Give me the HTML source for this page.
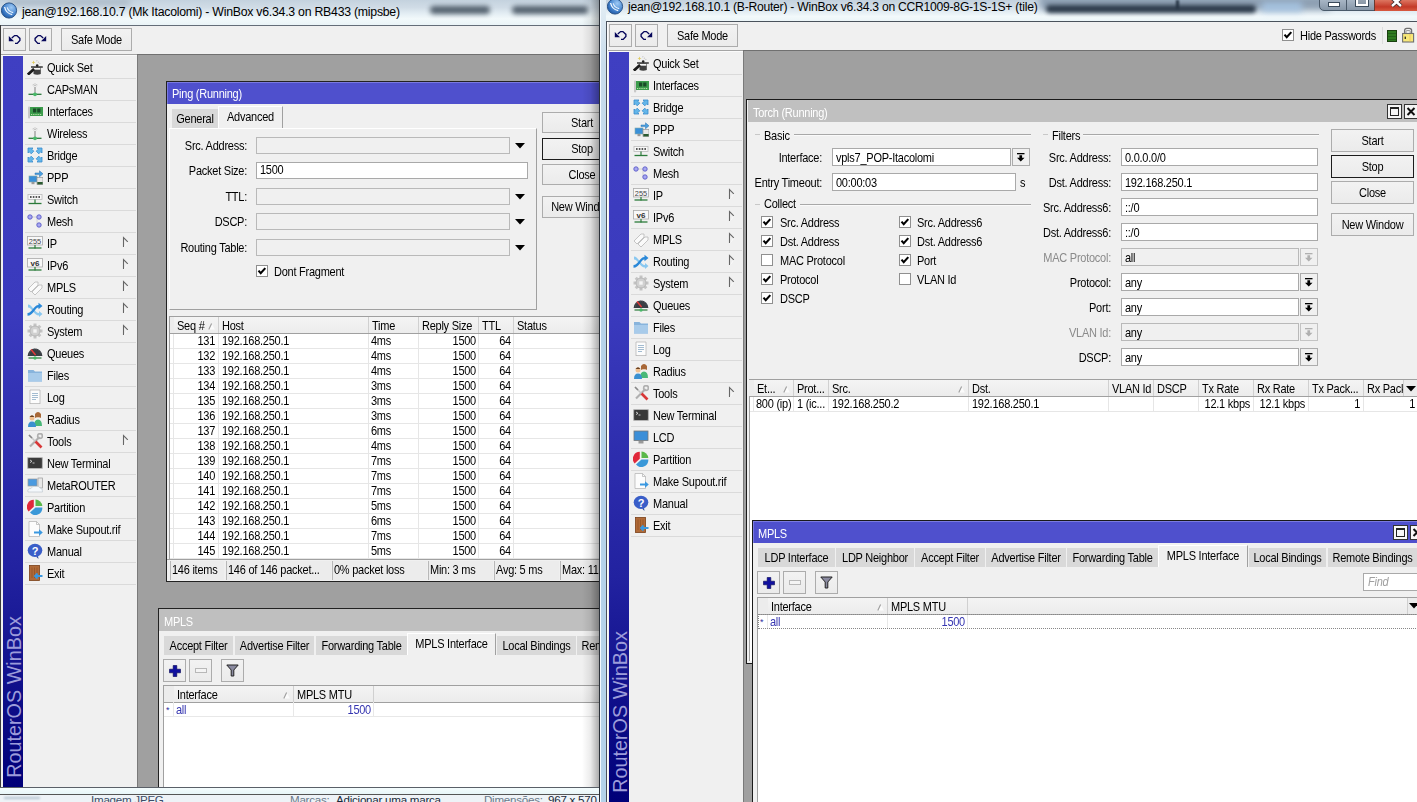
<!DOCTYPE html><html><head><meta charset="utf-8"><style>
html,body{margin:0;padding:0;}
body{width:1417px;height:802px;overflow:hidden;position:relative;background:#a0a0a0;font-family:"Liberation Sans",sans-serif;}
div,svg{position:absolute;}
.t{white-space:nowrap;letter-spacing:-0.25px;}
.clip{overflow:hidden;}
</style></head><body>
<div style="left:0px;top:0px;width:600px;height:802px;background:#eef4f8;"></div>
<div style="left:0px;top:0px;width:600px;height:25px;background:linear-gradient(180deg,#c4d2de 0%,#d0dce6 30%,#e4eef4 55%,#f2f9fb 75%,#eaf4f7 100%);"></div>
<div style="left:430px;top:6px;width:60px;height:8px;background:#3c4a58;border-radius:4px;filter:blur(2.5px);opacity:.85;"></div>
<div style="left:512px;top:6px;width:76px;height:8px;background:#3c4a58;border-radius:4px;filter:blur(2.5px);opacity:.85;"></div>
<div style="left:10px;top:0px;width:120px;height:5px;background:#8a9aaa;filter:blur(3px);opacity:.6;"></div>
<svg style="left:1px;top:2px" width="17" height="17" viewBox="0 0 17 17"><defs><radialGradient id="lg" cx="65%" cy="30%" r="75%"><stop offset="0" stop-color="#9cc8f4"/><stop offset="0.6" stop-color="#4a88d0"/><stop offset="1" stop-color="#1e5aa8"/></radialGradient></defs><circle cx="8" cy="8.5" r="7.6" fill="url(#lg)" stroke="#1f4a80" stroke-width="0.9"/><path d="M3.6 5 Q4.8 11.2 11.2 12.6" stroke="#f4faff" stroke-width="1.3" fill="none"/><path d="M6.2 5.4 Q7.4 9.6 12.2 10.6" stroke="#e8f4ff" stroke-width="1.1" fill="none"/></svg>
<div class="t" style="left:22px;top:4.869999999999999px;font-size:12.3px;line-height:14.14px;color:#000;">jean@192.168.10.7 (Mk Itacolomi) - WinBox v6.34.3 on RB433 (mipsbe)</div>
<div style="left:0px;top:25px;width:600px;height:762px;background:#f0f0f0;"></div>
<div style="left:0px;top:25px;width:600px;height:1px;background:#646d78;"></div>
<div style="left:0px;top:25px;width:1px;height:762px;background:#3a3a3a;"></div>
<div style="left:3px;top:28px;width:23px;height:23px;box-sizing:border-box;border:1px solid #acacac;background:linear-gradient(#f2f2f2,#ebebeb);"></div>
<svg style="left:3px;top:28px" width="23" height="23" viewBox="0 0 23 23"><g><path d="M5.8 8 V13.2 H11 Z" fill="#06065a"/><path d="M8.8 10 L11.6 7.6 H13.9 L16.9 10.4 V12.4 L14.2 15.4 H12" fill="none" stroke="#06065a" stroke-width="1.35"/></g></svg>
<div style="left:29px;top:28px;width:23px;height:23px;box-sizing:border-box;border:1px solid #acacac;background:linear-gradient(#f2f2f2,#ebebeb);"></div>
<svg style="left:29px;top:28px" width="23" height="23" viewBox="0 0 23 23"><g transform="translate(23,0) scale(-1,1)"><path d="M5.8 8 V13.2 H11 Z" fill="#06065a"/><path d="M8.8 10 L11.6 7.6 H13.9 L16.9 10.4 V12.4 L14.2 15.4 H12" fill="none" stroke="#06065a" stroke-width="1.35"/></g></svg>
<div style="left:61px;top:28px;width:71px;height:23px;box-sizing:border-box;border:1px solid #acacac;background:linear-gradient(#f2f2f2,#ebebeb);"></div>
<div class="t" style="left:61px;top:34.04px;width:71px;text-align:center;font-size:11px;line-height:12.65px;color:#000;transform:scaleY(1.12);transform-origin:0 9.955px;">Safe Mode</div>
<div style="left:1px;top:54px;width:599px;height:1px;background:#a4a4a4;"></div>
<div style="left:1px;top:55px;width:136px;height:1px;background:#fafafa;"></div>
<div style="left:3px;top:56px;width:20px;height:731px;background:linear-gradient(180deg,#3f3fc2 0%,#3a3abd 35%,#2222a0 70%,#000078 100%);"></div>
<div class="t" style="left:14.0px;top:697.0px;transform:translate(-50%,-50%) rotate(-90deg);font-size:19.8px;line-height:20px;color:#9c9cda;letter-spacing:0px;">RouterOS WinBox</div>
<div style="left:23px;top:56px;width:114px;height:731px;background:#f0f0f0;"></div>
<svg style="left:27px;top:59px" width="16" height="16" viewBox="0 0 16 16"><path d="M9.5 1.5 L14 5.5" stroke="#c0c0c0" stroke-width="1.2" stroke-dasharray="1 1"/><path d="M6.5 8.5 H13.8 V15 Q10.2 16.6 6.5 15Z" fill="#404040"/><rect x="7" y="8.8" width="6.3" height="1.9" fill="#f6f6f6"/><rect x="4" y="7.3" width="11.8" height="1.4" fill="#2a2a2a"/><circle cx="10.2" cy="6.6" r="1.3" fill="#222"/><path d="M0.8 15.6 L7 10" stroke="#1a1a1a" stroke-width="2.8"/><path d="M6.5 1.5 L7.1 2.9 L8.5 3.4 L7.1 3.9 L6.5 5.3 L5.9 3.9 L4.5 3.4 L5.9 2.9Z" fill="#e0cc60"/></svg>
<div class="t" style="left:47px;top:62.04px;font-size:11px;line-height:12.65px;color:#000;transform:scaleY(1.12);transform-origin:0 9.955px;">Quick Set</div>
<div style="left:25px;top:78px;width:111px;height:1px;background:#dadada;"></div>
<svg style="left:27px;top:81px" width="16" height="16" viewBox="0 0 16 16"><path d="M5.5 4 Q8 1.5 10.5 4" stroke="#c8c8c8" stroke-width="0.9" fill="none"/><path d="M6.5 5 Q8 3.8 9.5 5" stroke="#bbb" stroke-width="0.9" fill="none"/><path d="M8 6 V12" stroke="#b8b8b8" stroke-width="2"/><path d="M1.5 13.3 H14.5" stroke="#2a7a3a" stroke-width="1.3"/><circle cx="8" cy="13.3" r="1.9" fill="#48b868"/></svg>
<div class="t" style="left:47px;top:84.03999999999999px;font-size:11px;line-height:12.65px;color:#000;transform:scaleY(1.12);transform-origin:0 9.955px;">CAPsMAN</div>
<div style="left:25px;top:100px;width:111px;height:1px;background:#dadada;"></div>
<svg style="left:27px;top:103px" width="16" height="16" viewBox="0 0 16 16"><rect x="1" y="3.5" width="2.2" height="12" rx="1" fill="#c8c8c8"/><rect x="3" y="4" width="13" height="9" fill="#3c9c4c"/><rect x="6" y="5.5" width="3.2" height="4" fill="#1a4a28"/><rect x="10.2" y="5.5" width="3.2" height="4" fill="#1a4a28"/><path d="M4 11.5 H15" stroke="#b8e0a8" stroke-width="1" stroke-dasharray="1 0.8"/></svg>
<div class="t" style="left:47px;top:106.03999999999999px;font-size:11px;line-height:12.65px;color:#000;transform:scaleY(1.12);transform-origin:0 9.955px;">Interfaces</div>
<div style="left:25px;top:122px;width:111px;height:1px;background:#dadada;"></div>
<svg style="left:27px;top:125px" width="16" height="16" viewBox="0 0 16 16"><path d="M5.5 4 Q8 1.5 10.5 4" stroke="#c8c8c8" stroke-width="0.9" fill="none"/><path d="M6.5 5 Q8 3.8 9.5 5" stroke="#bbb" stroke-width="0.9" fill="none"/><path d="M8 6 V12" stroke="#b8b8b8" stroke-width="2"/><path d="M1.5 13.3 H14.5" stroke="#2a7a3a" stroke-width="1.3"/><circle cx="8" cy="13.3" r="1.9" fill="#48b868"/></svg>
<div class="t" style="left:47px;top:128.04px;font-size:11px;line-height:12.65px;color:#000;transform:scaleY(1.12);transform-origin:0 9.955px;">Wireless</div>
<div style="left:25px;top:144px;width:111px;height:1px;background:#dadada;"></div>
<svg style="left:27px;top:147px" width="16" height="16" viewBox="0 0 16 16"><path d="M1 1 H6 L4.8 2.2 L6.8 4.2 L4.2 6.8 L2.2 4.8 L1 6Z" fill="#62b6ea" stroke="#3a8ccc" stroke-width="0.8"/><g transform="translate(16,0) scale(-1,1)"><path d="M1 1 H6 L4.8 2.2 L6.8 4.2 L4.2 6.8 L2.2 4.8 L1 6Z" fill="#62b6ea" stroke="#3a8ccc" stroke-width="0.8"/></g><g transform="translate(0,16) scale(1,-1)"><path d="M1 1 H6 L4.8 2.2 L6.8 4.2 L4.2 6.8 L2.2 4.8 L1 6Z" fill="#62b6ea" stroke="#3a8ccc" stroke-width="0.8"/></g><g transform="translate(16,16) scale(-1,-1)"><path d="M1 1 H6 L4.8 2.2 L6.8 4.2 L4.2 6.8 L2.2 4.8 L1 6Z" fill="#62b6ea" stroke="#3a8ccc" stroke-width="0.8"/></g></svg>
<div class="t" style="left:47px;top:150.04px;font-size:11px;line-height:12.65px;color:#000;transform:scaleY(1.12);transform-origin:0 9.955px;">Bridge</div>
<div style="left:25px;top:166px;width:111px;height:1px;background:#dadada;"></div>
<svg style="left:27px;top:169px" width="16" height="16" viewBox="0 0 16 16"><rect x="2" y="7" width="8" height="6" fill="#3a90d8" stroke="#8aa" stroke-width="0.6"/><rect x="4.5" y="13" width="3" height="2.2" fill="#999"/><rect x="10" y="8.5" width="6" height="7" fill="#e8e8e8" stroke="#888" stroke-width="0.6"/><rect x="10.3" y="13" width="5.4" height="2.4" fill="#2a5a30"/><path d="M8 4 H12.5 V1.8 L16 4.8 L12.5 7.8 V5.6 H8Z" fill="#4aa0e0" stroke="#2a70b0" stroke-width="0.5"/></svg>
<div class="t" style="left:47px;top:172.04px;font-size:11px;line-height:12.65px;color:#000;transform:scaleY(1.12);transform-origin:0 9.955px;">PPP</div>
<div style="left:25px;top:188px;width:111px;height:1px;background:#dadada;"></div>
<svg style="left:27px;top:191px" width="16" height="16" viewBox="0 0 16 16"><rect x="1" y="3.5" width="14" height="5" fill="#f8f8f8" stroke="#bbb" stroke-width="0.8"/><path d="M3 6 H4.6 M5.8 6 H7.4 M8.6 6 H10.2 M11.4 6 H13" stroke="#222" stroke-width="1.6"/><path d="M1.5 12.5 H14.5" stroke="#2a7a3a" stroke-width="1.3"/><path d="M8 8.5 V13" stroke="#2a7a3a" stroke-width="1.2"/></svg>
<div class="t" style="left:47px;top:194.04px;font-size:11px;line-height:12.65px;color:#000;transform:scaleY(1.12);transform-origin:0 9.955px;">Switch</div>
<div style="left:25px;top:210px;width:111px;height:1px;background:#dadada;"></div>
<svg style="left:27px;top:213px" width="16" height="16" viewBox="0 0 16 16"><path d="M4 4 H10 V12" stroke="#ccc" stroke-width="0.8" fill="none"/><circle cx="3" cy="4" r="2.2" fill="#a8a8f0" stroke="#5a5ac8" stroke-width="0.9"/><circle cx="12" cy="4" r="2.2" fill="#a8a8f0" stroke="#5a5ac8" stroke-width="0.9"/><circle cx="12" cy="12" r="2.2" fill="#a8a8f0" stroke="#5a5ac8" stroke-width="0.9"/></svg>
<div class="t" style="left:47px;top:216.04px;font-size:11px;line-height:12.65px;color:#000;transform:scaleY(1.12);transform-origin:0 9.955px;">Mesh</div>
<div style="left:25px;top:232px;width:111px;height:1px;background:#dadada;"></div>
<svg style="left:27px;top:235px" width="16" height="16" viewBox="0 0 16 16"><rect x="0.5" y="1.5" width="15" height="8.5" fill="#f8f8f8" stroke="#aaa" stroke-width="0.8"/><text x="8" y="8.6" font-size="7.4" text-anchor="middle" font-family="Liberation Sans" fill="#444">255</text><path d="M1.5 13 H14.5" stroke="#2a7a3a" stroke-width="1.3"/><path d="M8 10 V13.5" stroke="#2a7a3a" stroke-width="1.2"/></svg>
<div class="t" style="left:47px;top:238.04px;font-size:11px;line-height:12.65px;color:#000;transform:scaleY(1.12);transform-origin:0 9.955px;">IP</div>
<div style="left:25px;top:254px;width:111px;height:1px;background:#dadada;"></div>
<svg style="left:122px;top:236px" width="8" height="12" viewBox="0 0 8 12"><path d="M2 11 L6 6" fill="none" stroke="#fafafa" stroke-width="1"/><path d="M1.5 11 V1.5 L5.8 5.8" fill="none" stroke="#666" stroke-width="1.1"/></svg>
<svg style="left:27px;top:257px" width="16" height="16" viewBox="0 0 16 16"><rect x="0.5" y="1.5" width="15" height="8.5" fill="#f8f8f8" stroke="#aaa" stroke-width="0.8"/><text x="8" y="8.8" font-size="8" font-weight="bold" text-anchor="middle" font-family="Liberation Sans" fill="#333">v6</text><path d="M1.5 13 H14.5" stroke="#2a7a3a" stroke-width="1.3"/><path d="M8 10 V13.5" stroke="#2a7a3a" stroke-width="1.2"/></svg>
<div class="t" style="left:47px;top:260.04px;font-size:11px;line-height:12.65px;color:#000;transform:scaleY(1.12);transform-origin:0 9.955px;">IPv6</div>
<div style="left:25px;top:276px;width:111px;height:1px;background:#dadada;"></div>
<svg style="left:122px;top:258px" width="8" height="12" viewBox="0 0 8 12"><path d="M2 11 L6 6" fill="none" stroke="#fafafa" stroke-width="1"/><path d="M1.5 11 V1.5 L5.8 5.8" fill="none" stroke="#666" stroke-width="1.1"/></svg>
<svg style="left:27px;top:279px" width="16" height="16" viewBox="0 0 16 16"><path d="M1 10 L8 3 L11 3 L11 6 L4 13Z" fill="#fafafa" stroke="#b8b8b8" stroke-width="0.8"/><path d="M5 13 L12 6 L15 6 L15 9 L8 16Z" fill="#fafafa" stroke="#b8b8b8" stroke-width="0.8"/></svg>
<div class="t" style="left:47px;top:282.04px;font-size:11px;line-height:12.65px;color:#000;transform:scaleY(1.12);transform-origin:0 9.955px;">MPLS</div>
<div style="left:25px;top:298px;width:111px;height:1px;background:#dadada;"></div>
<svg style="left:122px;top:280px" width="8" height="12" viewBox="0 0 8 12"><path d="M2 11 L6 6" fill="none" stroke="#fafafa" stroke-width="1"/><path d="M1.5 11 V1.5 L5.8 5.8" fill="none" stroke="#666" stroke-width="1.1"/></svg>
<svg style="left:27px;top:301px" width="16" height="16" viewBox="0 0 16 16"><path d="M1 3.5 C5 3.5 8 12 12 12 V10 L15.5 13 L12 16 V14.5 C7 14.5 5 6.5 1 6.5Z" fill="#8ac8f0"/><path d="M0.5 12 C5 12 7 4 11.5 4 V1.8 L15.5 5 L11.5 8.2 V6.5 C8 6.5 6 14.8 0.5 14.8Z" fill="#2a88d8"/></svg>
<div class="t" style="left:47px;top:304.04px;font-size:11px;line-height:12.65px;color:#000;transform:scaleY(1.12);transform-origin:0 9.955px;">Routing</div>
<div style="left:25px;top:320px;width:111px;height:1px;background:#dadada;"></div>
<svg style="left:122px;top:302px" width="8" height="12" viewBox="0 0 8 12"><path d="M2 11 L6 6" fill="none" stroke="#fafafa" stroke-width="1"/><path d="M1.5 11 V1.5 L5.8 5.8" fill="none" stroke="#666" stroke-width="1.1"/></svg>
<svg style="left:27px;top:323px" width="16" height="16" viewBox="0 0 16 16"><g fill="#c4c4c4"><rect x="6.5" y="0.5" width="3" height="15"/><rect x="0.5" y="6.5" width="15" height="3"/><rect x="6.5" y="0.5" width="3" height="15" transform="rotate(45 8 8)"/><rect x="6.5" y="0.5" width="3" height="15" transform="rotate(-45 8 8)"/></g><circle cx="8" cy="8" r="5" fill="#d0d0d0" stroke="#b0b0b0" stroke-width="0.8"/><rect x="6.3" y="6.3" width="3.4" height="3.4" fill="#f4f4f4"/></svg>
<div class="t" style="left:47px;top:326.04px;font-size:11px;line-height:12.65px;color:#000;transform:scaleY(1.12);transform-origin:0 9.955px;">System</div>
<div style="left:25px;top:342px;width:111px;height:1px;background:#dadada;"></div>
<svg style="left:122px;top:324px" width="8" height="12" viewBox="0 0 8 12"><path d="M2 11 L6 6" fill="none" stroke="#fafafa" stroke-width="1"/><path d="M1.5 11 V1.5 L5.8 5.8" fill="none" stroke="#666" stroke-width="1.1"/></svg>
<svg style="left:27px;top:345px" width="16" height="16" viewBox="0 0 16 16"><path d="M0.6 11 A7.4 7.6 0 0 1 15.4 11 Z" fill="#3a3e44"/><path d="M2.5 9.5 A5.5 5.5 0 0 1 13.5 9.5" fill="none" stroke="#5a6068" stroke-width="0.8" stroke-dasharray="1 1.4"/><path d="M4 4.5 L8.6 10" stroke="#e83a3a" stroke-width="1.4"/><path d="M1.5 13 H14.5" stroke="#2a7a3a" stroke-width="1.2"/><circle cx="8" cy="13" r="1.7" fill="#48b868"/></svg>
<div class="t" style="left:47px;top:348.04px;font-size:11px;line-height:12.65px;color:#000;transform:scaleY(1.12);transform-origin:0 9.955px;">Queues</div>
<div style="left:25px;top:364px;width:111px;height:1px;background:#dadada;"></div>
<svg style="left:27px;top:367px" width="16" height="16" viewBox="0 0 16 16"><path d="M1 3 H6.5 L8 4.5 H15 V14.5 H1Z" fill="#88b4dc"/><path d="M1 6 H15 V14.5 H1Z" fill="#a8cbea"/></svg>
<div class="t" style="left:47px;top:370.04px;font-size:11px;line-height:12.65px;color:#000;transform:scaleY(1.12);transform-origin:0 9.955px;">Files</div>
<div style="left:25px;top:386px;width:111px;height:1px;background:#dadada;"></div>
<svg style="left:27px;top:389px" width="16" height="16" viewBox="0 0 16 16"><path d="M3 1 H13 V15 L12 14 L11 15 L10 14 L9 15 L8 14 L7 15 L6 14 L5 15 L4 14 L3 15Z" fill="#fcfcfc" stroke="#b0b0b0" stroke-width="0.7"/><path d="M5 4.5 H11 M5 6.5 H11 M5 8.5 H11 M5 10.5 H9" stroke="#8aaac4" stroke-width="0.8"/></svg>
<div class="t" style="left:47px;top:392.04px;font-size:11px;line-height:12.65px;color:#000;transform:scaleY(1.12);transform-origin:0 9.955px;">Log</div>
<div style="left:25px;top:408px;width:111px;height:1px;background:#dadada;"></div>
<svg style="left:27px;top:411px" width="16" height="16" viewBox="0 0 16 16"><circle cx="11" cy="4" r="2.6" fill="#e8b888"/><path d="M8 3 Q11 -1 14 3 L14 7 Q11 5 8 7Z" fill="#a86838"/><path d="M7 15 Q7 8.5 11 8.5 Q15 8.5 15 15Z" fill="#48b878"/><circle cx="5" cy="7" r="2.5" fill="#f0c090"/><path d="M2.5 6 Q5 2.5 7.5 6Z" fill="#6a4020"/><path d="M1 16 Q1 10.5 5 10.5 Q9 10.5 9 16Z" fill="#3a90d0"/></svg>
<div class="t" style="left:47px;top:414.04px;font-size:11px;line-height:12.65px;color:#000;transform:scaleY(1.12);transform-origin:0 9.955px;">Radius</div>
<div style="left:25px;top:430px;width:111px;height:1px;background:#dadada;"></div>
<svg style="left:27px;top:433px" width="16" height="16" viewBox="0 0 16 16"><path d="M3 13.5 L12.5 4" stroke="#b0b0b0" stroke-width="2.2"/><circle cx="13" cy="3" r="2.4" fill="none" stroke="#b0b0b0" stroke-width="1.6"/><path d="M2 2 L14 14" stroke="#c8c8c8" stroke-width="1.5"/><path d="M8.5 8.5 L14.5 14.5" stroke="#d83838" stroke-width="2.6"/><path d="M2 2 L5 5" stroke="#888" stroke-width="1.5"/></svg>
<div class="t" style="left:47px;top:436.04px;font-size:11px;line-height:12.65px;color:#000;transform:scaleY(1.12);transform-origin:0 9.955px;">Tools</div>
<div style="left:25px;top:452px;width:111px;height:1px;background:#dadada;"></div>
<svg style="left:122px;top:434px" width="8" height="12" viewBox="0 0 8 12"><path d="M2 11 L6 6" fill="none" stroke="#fafafa" stroke-width="1"/><path d="M1.5 11 V1.5 L5.8 5.8" fill="none" stroke="#666" stroke-width="1.1"/></svg>
<svg style="left:27px;top:455px" width="16" height="16" viewBox="0 0 16 16"><rect x="0.5" y="2.5" width="15" height="11" rx="1.2" fill="#3a3a3a" stroke="#b4b4b4" stroke-width="1.2"/><path d="M3 5 L5 6.3 L3 7.6 M5.5 8 H7.5" stroke="#e8e8e8" stroke-width="0.8" fill="none"/></svg>
<div class="t" style="left:47px;top:458.04px;font-size:11px;line-height:12.65px;color:#000;transform:scaleY(1.12);transform-origin:0 9.955px;">New Terminal</div>
<div style="left:25px;top:474px;width:111px;height:1px;background:#dadada;"></div>
<svg style="left:27px;top:477px" width="16" height="16" viewBox="0 0 16 16"><rect x="1" y="2" width="9" height="7" fill="#4a9ae0" stroke="#999" stroke-width="0.7"/><rect x="11" y="1" width="4.5" height="10" fill="#e8e8e8" stroke="#999" stroke-width="0.7"/><path d="M1 15 Q0 11.5 4 11.5 Q5 8.5 9 9.5 Q11.5 8.5 13 11 Q16 11 15.5 15Z" fill="#f4f8fc" stroke="#c0c8d0" stroke-width="0.7"/></svg>
<div class="t" style="left:47px;top:480.04px;font-size:11px;line-height:12.65px;color:#000;transform:scaleY(1.12);transform-origin:0 9.955px;">MetaROUTER</div>
<div style="left:25px;top:496px;width:111px;height:1px;background:#dadada;"></div>
<svg style="left:27px;top:499px" width="16" height="16" viewBox="0 0 16 16"><path d="M6.8 7.8 L6.8 0.8 A7 7 0 0 0 1.6 12.4Z" fill="#e0283a"/><path d="M8.5 7 L8.5 0.5 A7 7 0 0 1 15.3 7Z" fill="#5ab84a"/><path d="M8.5 8.6 L15.3 8.6 A7 7 0 0 1 3 13.6Z" fill="#3a98d8"/></svg>
<div class="t" style="left:47px;top:502.04px;font-size:11px;line-height:12.65px;color:#000;transform:scaleY(1.12);transform-origin:0 9.955px;">Partition</div>
<div style="left:25px;top:518px;width:111px;height:1px;background:#dadada;"></div>
<svg style="left:27px;top:521px" width="16" height="16" viewBox="0 0 16 16"><path d="M2 0.5 H9.5 L12.5 3.5 V15.5 H2Z" fill="#fcfcfc" stroke="#b0b0b0" stroke-width="0.7"/><path d="M9.5 0.5 V3.5 H12.5" fill="none" stroke="#b0b0b0" stroke-width="0.7"/><path d="M7 10.5 H12 V8.3 L15.8 11.5 L12 14.7 V12.5 H7Z" fill="#3a98e0"/></svg>
<div class="t" style="left:47px;top:524.04px;font-size:11px;line-height:12.65px;color:#000;transform:scaleY(1.12);transform-origin:0 9.955px;">Make Supout.rif</div>
<div style="left:25px;top:540px;width:111px;height:1px;background:#dadada;"></div>
<svg style="left:27px;top:543px" width="16" height="16" viewBox="0 0 16 16"><path d="M9 13.5 L11.5 16 L11 13Z" fill="#2a4aa0"/><ellipse cx="8" cy="7.3" rx="7.3" ry="6.6" fill="#3a5ec8"/><text x="8" y="11.5" font-size="11" font-weight="bold" text-anchor="middle" font-family="Liberation Sans" fill="#fff">?</text></svg>
<div class="t" style="left:47px;top:546.04px;font-size:11px;line-height:12.65px;color:#000;transform:scaleY(1.12);transform-origin:0 9.955px;">Manual</div>
<div style="left:25px;top:562px;width:111px;height:1px;background:#dadada;"></div>
<svg style="left:27px;top:565px" width="16" height="16" viewBox="0 0 16 16"><rect x="2.5" y="0.5" width="10" height="15" fill="#b06a38" stroke="#7a4018" stroke-width="0.8"/><path d="M5 2.5 V13 M7.5 2.5 V13 M10 2.5 V13" stroke="#8a4a20" stroke-width="0.6"/><path d="M8 11 H15.5 M10.5 8.5 L8 11 L10.5 13.5" stroke="#3a98e0" stroke-width="1.8" fill="none"/></svg>
<div class="t" style="left:47px;top:568.04px;font-size:11px;line-height:12.65px;color:#000;transform:scaleY(1.12);transform-origin:0 9.955px;">Exit</div>
<div style="left:25px;top:584px;width:111px;height:1px;background:#dadada;"></div>
<div style="left:137px;top:55px;width:463px;height:732px;background:#a0a0a0;"></div>
<div style="left:137px;top:55px;width:1px;height:732px;background:#7a7a7a;"></div>
<div style="left:137px;top:54px;width:463px;height:1px;background:#707070;"></div>
<div style="left:166px;top:81px;width:440px;height:501px;box-sizing:border-box;border:1px solid #222;background:#f0f0f0;"></div>
<div style="left:167px;top:82px;width:440px;height:22px;background:#4f50cd;"></div>
<div style="left:167px;top:82px;width:440px;height:1px;background:#7a7ae0;"></div>
<div style="left:167px;top:82px;width:1px;height:22px;background:#7a7ae0;"></div>
<div class="t" style="left:172px;top:88.03999999999999px;font-size:11px;line-height:12.65px;color:#fff;transform:scaleY(1.12);transform-origin:0 9.955px;">Ping (Running)</div>
<div style="left:172px;top:109px;width:46px;height:19px;background:#d9d9d9;"></div>
<div class="t" style="left:172px;top:113.03999999999999px;width:46px;text-align:center;font-size:11px;line-height:12.65px;color:#000;transform:scaleY(1.12);transform-origin:0 9.955px;">General</div>
<div style="left:218px;top:106px;width:65px;height:22px;box-sizing:border-box;background:#f0f0f0;border-left:1px solid #fff;border-top:1px solid #fff;border-right:1px solid #a0a0a0;"></div>
<div class="t" style="left:218px;top:111.03999999999999px;width:65px;text-align:center;font-size:11px;line-height:12.65px;color:#000;transform:scaleY(1.12);transform-origin:0 9.955px;">Advanced</div>
<div style="left:169px;top:128px;width:368px;height:182px;box-sizing:border-box;border-left:1px solid #fff;border-top:1px solid #fff;border-right:1px solid #a0a0a0;border-bottom:1px solid #a0a0a0;"></div>
<div class="t" style="left:147px;top:140.04px;width:100px;text-align:right;font-size:11px;line-height:12.65px;color:#000;transform:scaleY(1.12);transform-origin:0 9.955px;">Src. Address:</div>
<div style="left:256px;top:137px;width:254px;height:17px;box-sizing:border-box;border:1px solid #b9b9b9;background:#f0f0f0;"></div>
<svg style="left:515px;top:143px" width="10" height="6" viewBox="0 0 10 6"><path d="M0 0 H10 L5 5.5 Z" fill="#000"/></svg>
<div class="t" style="left:147px;top:165.04px;width:100px;text-align:right;font-size:11px;line-height:12.65px;color:#000;transform:scaleY(1.12);transform-origin:0 9.955px;">Packet Size:</div>
<div style="left:256px;top:162px;width:272px;height:17px;box-sizing:border-box;border:1px solid #a9a9a9;background:#fff;"></div>
<div class="t" style="left:260px;top:164.04px;font-size:11px;line-height:12.65px;color:#000;transform:scaleY(1.12);transform-origin:0 9.955px;">1500</div>
<div class="t" style="left:147px;top:191.04px;width:100px;text-align:right;font-size:11px;line-height:12.65px;color:#000;transform:scaleY(1.12);transform-origin:0 9.955px;">TTL:</div>
<div style="left:256px;top:188px;width:254px;height:17px;box-sizing:border-box;border:1px solid #b9b9b9;background:#f0f0f0;"></div>
<svg style="left:515px;top:194px" width="10" height="6" viewBox="0 0 10 6"><path d="M0 0 H10 L5 5.5 Z" fill="#000"/></svg>
<div class="t" style="left:147px;top:216.04px;width:100px;text-align:right;font-size:11px;line-height:12.65px;color:#000;transform:scaleY(1.12);transform-origin:0 9.955px;">DSCP:</div>
<div style="left:256px;top:213px;width:254px;height:17px;box-sizing:border-box;border:1px solid #b9b9b9;background:#f0f0f0;"></div>
<svg style="left:515px;top:219px" width="10" height="6" viewBox="0 0 10 6"><path d="M0 0 H10 L5 5.5 Z" fill="#000"/></svg>
<div class="t" style="left:147px;top:242.04px;width:100px;text-align:right;font-size:11px;line-height:12.65px;color:#000;transform:scaleY(1.12);transform-origin:0 9.955px;">Routing Table:</div>
<div style="left:256px;top:239px;width:254px;height:17px;box-sizing:border-box;border:1px solid #b9b9b9;background:#f0f0f0;"></div>
<svg style="left:515px;top:245px" width="10" height="6" viewBox="0 0 10 6"><path d="M0 0 H10 L5 5.5 Z" fill="#000"/></svg>
<div style="left:256px;top:265px;width:12px;height:12px;box-sizing:border-box;border:1px solid #8f8f8f;background:#fff;"></div>
<svg style="left:256px;top:265px" width="12" height="12" viewBox="0 0 12 12"><path d="M2.5 5.6 L4.7 8.1 L9.3 3.1" fill="none" stroke="#000" stroke-width="2.1"/></svg>
<div class="t" style="left:274px;top:266.04px;font-size:11px;line-height:12.65px;color:#000;transform:scaleY(1.12);transform-origin:0 9.955px;">Dont Fragment</div>
<div style="left:542px;top:112px;width:80px;height:21px;box-sizing:border-box;border:1px solid #acacac;background:linear-gradient(#f2f2f2,#ebebeb);"></div>
<div class="t" style="left:542px;top:117.03999999999999px;width:80px;text-align:center;font-size:11px;line-height:12.65px;color:#000;transform:scaleY(1.12);transform-origin:0 9.955px;">Start</div>
<div style="left:542px;top:138px;width:80px;height:22px;box-sizing:border-box;border:1px solid #1c1c1c;background:linear-gradient(#f2f2f2,#ebebeb);"></div>
<div class="t" style="left:542px;top:143.04px;width:80px;text-align:center;font-size:11px;line-height:12.65px;color:#000;transform:scaleY(1.12);transform-origin:0 9.955px;">Stop</div>
<div style="left:542px;top:164px;width:80px;height:21px;box-sizing:border-box;border:1px solid #acacac;background:linear-gradient(#f2f2f2,#ebebeb);"></div>
<div class="t" style="left:542px;top:169.04px;width:80px;text-align:center;font-size:11px;line-height:12.65px;color:#000;transform:scaleY(1.12);transform-origin:0 9.955px;">Close</div>
<div style="left:542px;top:196px;width:80px;height:22px;box-sizing:border-box;border:1px solid #acacac;background:linear-gradient(#f2f2f2,#ebebeb);"></div>
<div class="t" style="left:542px;top:201.04px;width:80px;text-align:center;font-size:11px;line-height:12.65px;color:#000;transform:scaleY(1.12);transform-origin:0 9.955px;">New Window</div>
<div style="left:169px;top:316px;width:440px;height:243px;background:#fff;"></div>
<div style="left:169px;top:316px;width:440px;height:1px;background:#a0a0a0;"></div>
<div style="left:170px;top:317px;width:4px;height:16px;background:#ececec;border-right:1px solid #d0d0d0;"></div>
<div style="left:174px;top:317px;width:45px;height:16px;box-sizing:border-box;background:linear-gradient(#f4f4f4,#ececec);border-right:1px solid #d0d0d0;"></div>
<div class="t" style="left:177px;top:320.04px;font-size:11px;line-height:12.65px;color:#000;transform:scaleY(1.12);transform-origin:0 9.955px;">Seq #</div>
<svg style="left:207px;top:322px" width="8" height="8" viewBox="0 0 8 8"><path d="M4.5 1 L7.8 7.5 H1.5Z" fill="#fbfbfb"/><path d="M1.8 7.5 L4.6 1.5" stroke="#9a9a9a" stroke-width="1.1"/></svg>
<div style="left:219px;top:317px;width:150px;height:16px;box-sizing:border-box;background:linear-gradient(#f4f4f4,#ececec);border-right:1px solid #d0d0d0;"></div>
<div class="t" style="left:222px;top:320.04px;font-size:11px;line-height:12.65px;color:#000;transform:scaleY(1.12);transform-origin:0 9.955px;">Host</div>
<div style="left:369px;top:317px;width:50px;height:16px;box-sizing:border-box;background:linear-gradient(#f4f4f4,#ececec);border-right:1px solid #d0d0d0;"></div>
<div class="t" style="left:372px;top:320.04px;font-size:11px;line-height:12.65px;color:#000;transform:scaleY(1.12);transform-origin:0 9.955px;">Time</div>
<div style="left:419px;top:317px;width:60px;height:16px;box-sizing:border-box;background:linear-gradient(#f4f4f4,#ececec);border-right:1px solid #d0d0d0;"></div>
<div class="t" style="left:422px;top:320.04px;font-size:11px;line-height:12.65px;color:#000;transform:scaleY(1.12);transform-origin:0 9.955px;">Reply Size</div>
<div style="left:479px;top:317px;width:35px;height:16px;box-sizing:border-box;background:linear-gradient(#f4f4f4,#ececec);border-right:1px solid #d0d0d0;"></div>
<div class="t" style="left:482px;top:320.04px;font-size:11px;line-height:12.65px;color:#000;transform:scaleY(1.12);transform-origin:0 9.955px;">TTL</div>
<div style="left:514px;top:317px;width:100px;height:16px;box-sizing:border-box;background:linear-gradient(#f4f4f4,#ececec);border-right:1px solid #d0d0d0;"></div>
<div class="t" style="left:517px;top:320.04px;font-size:11px;line-height:12.65px;color:#000;transform:scaleY(1.12);transform-origin:0 9.955px;">Status</div>
<div style="left:169px;top:333px;width:440px;height:1px;background:#a0a0a0;"></div>
<div style="left:169px;top:316px;width:1px;height:243px;background:#a0a0a0;"></div>
<div class="t" style="left:175px;top:335.04px;width:40px;text-align:right;font-size:11px;line-height:12.65px;color:#000;transform:scaleY(1.12);transform-origin:0 9.955px;">131</div>
<div class="t" style="left:222px;top:335.04px;font-size:11px;line-height:12.65px;color:#000;transform:scaleY(1.12);transform-origin:0 9.955px;">192.168.250.1</div>
<div class="t" style="left:371px;top:335.04px;font-size:11px;line-height:12.65px;color:#000;transform:scaleY(1.12);transform-origin:0 9.955px;">4ms</div>
<div class="t" style="left:426px;top:335.04px;width:50px;text-align:right;font-size:11px;line-height:12.65px;color:#000;transform:scaleY(1.12);transform-origin:0 9.955px;">1500</div>
<div class="t" style="left:481px;top:335.04px;width:30px;text-align:right;font-size:11px;line-height:12.65px;color:#000;transform:scaleY(1.12);transform-origin:0 9.955px;">64</div>
<div style="left:170px;top:348px;width:430px;height:1px;background:#e6e6e6;"></div>
<div class="t" style="left:175px;top:350.04px;width:40px;text-align:right;font-size:11px;line-height:12.65px;color:#000;transform:scaleY(1.12);transform-origin:0 9.955px;">132</div>
<div class="t" style="left:222px;top:350.04px;font-size:11px;line-height:12.65px;color:#000;transform:scaleY(1.12);transform-origin:0 9.955px;">192.168.250.1</div>
<div class="t" style="left:371px;top:350.04px;font-size:11px;line-height:12.65px;color:#000;transform:scaleY(1.12);transform-origin:0 9.955px;">4ms</div>
<div class="t" style="left:426px;top:350.04px;width:50px;text-align:right;font-size:11px;line-height:12.65px;color:#000;transform:scaleY(1.12);transform-origin:0 9.955px;">1500</div>
<div class="t" style="left:481px;top:350.04px;width:30px;text-align:right;font-size:11px;line-height:12.65px;color:#000;transform:scaleY(1.12);transform-origin:0 9.955px;">64</div>
<div style="left:170px;top:363px;width:430px;height:1px;background:#e6e6e6;"></div>
<div class="t" style="left:175px;top:365.04px;width:40px;text-align:right;font-size:11px;line-height:12.65px;color:#000;transform:scaleY(1.12);transform-origin:0 9.955px;">133</div>
<div class="t" style="left:222px;top:365.04px;font-size:11px;line-height:12.65px;color:#000;transform:scaleY(1.12);transform-origin:0 9.955px;">192.168.250.1</div>
<div class="t" style="left:371px;top:365.04px;font-size:11px;line-height:12.65px;color:#000;transform:scaleY(1.12);transform-origin:0 9.955px;">4ms</div>
<div class="t" style="left:426px;top:365.04px;width:50px;text-align:right;font-size:11px;line-height:12.65px;color:#000;transform:scaleY(1.12);transform-origin:0 9.955px;">1500</div>
<div class="t" style="left:481px;top:365.04px;width:30px;text-align:right;font-size:11px;line-height:12.65px;color:#000;transform:scaleY(1.12);transform-origin:0 9.955px;">64</div>
<div style="left:170px;top:378px;width:430px;height:1px;background:#e6e6e6;"></div>
<div class="t" style="left:175px;top:380.04px;width:40px;text-align:right;font-size:11px;line-height:12.65px;color:#000;transform:scaleY(1.12);transform-origin:0 9.955px;">134</div>
<div class="t" style="left:222px;top:380.04px;font-size:11px;line-height:12.65px;color:#000;transform:scaleY(1.12);transform-origin:0 9.955px;">192.168.250.1</div>
<div class="t" style="left:371px;top:380.04px;font-size:11px;line-height:12.65px;color:#000;transform:scaleY(1.12);transform-origin:0 9.955px;">3ms</div>
<div class="t" style="left:426px;top:380.04px;width:50px;text-align:right;font-size:11px;line-height:12.65px;color:#000;transform:scaleY(1.12);transform-origin:0 9.955px;">1500</div>
<div class="t" style="left:481px;top:380.04px;width:30px;text-align:right;font-size:11px;line-height:12.65px;color:#000;transform:scaleY(1.12);transform-origin:0 9.955px;">64</div>
<div style="left:170px;top:393px;width:430px;height:1px;background:#e6e6e6;"></div>
<div class="t" style="left:175px;top:395.04px;width:40px;text-align:right;font-size:11px;line-height:12.65px;color:#000;transform:scaleY(1.12);transform-origin:0 9.955px;">135</div>
<div class="t" style="left:222px;top:395.04px;font-size:11px;line-height:12.65px;color:#000;transform:scaleY(1.12);transform-origin:0 9.955px;">192.168.250.1</div>
<div class="t" style="left:371px;top:395.04px;font-size:11px;line-height:12.65px;color:#000;transform:scaleY(1.12);transform-origin:0 9.955px;">3ms</div>
<div class="t" style="left:426px;top:395.04px;width:50px;text-align:right;font-size:11px;line-height:12.65px;color:#000;transform:scaleY(1.12);transform-origin:0 9.955px;">1500</div>
<div class="t" style="left:481px;top:395.04px;width:30px;text-align:right;font-size:11px;line-height:12.65px;color:#000;transform:scaleY(1.12);transform-origin:0 9.955px;">64</div>
<div style="left:170px;top:408px;width:430px;height:1px;background:#e6e6e6;"></div>
<div class="t" style="left:175px;top:410.04px;width:40px;text-align:right;font-size:11px;line-height:12.65px;color:#000;transform:scaleY(1.12);transform-origin:0 9.955px;">136</div>
<div class="t" style="left:222px;top:410.04px;font-size:11px;line-height:12.65px;color:#000;transform:scaleY(1.12);transform-origin:0 9.955px;">192.168.250.1</div>
<div class="t" style="left:371px;top:410.04px;font-size:11px;line-height:12.65px;color:#000;transform:scaleY(1.12);transform-origin:0 9.955px;">3ms</div>
<div class="t" style="left:426px;top:410.04px;width:50px;text-align:right;font-size:11px;line-height:12.65px;color:#000;transform:scaleY(1.12);transform-origin:0 9.955px;">1500</div>
<div class="t" style="left:481px;top:410.04px;width:30px;text-align:right;font-size:11px;line-height:12.65px;color:#000;transform:scaleY(1.12);transform-origin:0 9.955px;">64</div>
<div style="left:170px;top:423px;width:430px;height:1px;background:#e6e6e6;"></div>
<div class="t" style="left:175px;top:425.04px;width:40px;text-align:right;font-size:11px;line-height:12.65px;color:#000;transform:scaleY(1.12);transform-origin:0 9.955px;">137</div>
<div class="t" style="left:222px;top:425.04px;font-size:11px;line-height:12.65px;color:#000;transform:scaleY(1.12);transform-origin:0 9.955px;">192.168.250.1</div>
<div class="t" style="left:371px;top:425.04px;font-size:11px;line-height:12.65px;color:#000;transform:scaleY(1.12);transform-origin:0 9.955px;">6ms</div>
<div class="t" style="left:426px;top:425.04px;width:50px;text-align:right;font-size:11px;line-height:12.65px;color:#000;transform:scaleY(1.12);transform-origin:0 9.955px;">1500</div>
<div class="t" style="left:481px;top:425.04px;width:30px;text-align:right;font-size:11px;line-height:12.65px;color:#000;transform:scaleY(1.12);transform-origin:0 9.955px;">64</div>
<div style="left:170px;top:438px;width:430px;height:1px;background:#e6e6e6;"></div>
<div class="t" style="left:175px;top:440.04px;width:40px;text-align:right;font-size:11px;line-height:12.65px;color:#000;transform:scaleY(1.12);transform-origin:0 9.955px;">138</div>
<div class="t" style="left:222px;top:440.04px;font-size:11px;line-height:12.65px;color:#000;transform:scaleY(1.12);transform-origin:0 9.955px;">192.168.250.1</div>
<div class="t" style="left:371px;top:440.04px;font-size:11px;line-height:12.65px;color:#000;transform:scaleY(1.12);transform-origin:0 9.955px;">4ms</div>
<div class="t" style="left:426px;top:440.04px;width:50px;text-align:right;font-size:11px;line-height:12.65px;color:#000;transform:scaleY(1.12);transform-origin:0 9.955px;">1500</div>
<div class="t" style="left:481px;top:440.04px;width:30px;text-align:right;font-size:11px;line-height:12.65px;color:#000;transform:scaleY(1.12);transform-origin:0 9.955px;">64</div>
<div style="left:170px;top:453px;width:430px;height:1px;background:#e6e6e6;"></div>
<div class="t" style="left:175px;top:455.04px;width:40px;text-align:right;font-size:11px;line-height:12.65px;color:#000;transform:scaleY(1.12);transform-origin:0 9.955px;">139</div>
<div class="t" style="left:222px;top:455.04px;font-size:11px;line-height:12.65px;color:#000;transform:scaleY(1.12);transform-origin:0 9.955px;">192.168.250.1</div>
<div class="t" style="left:371px;top:455.04px;font-size:11px;line-height:12.65px;color:#000;transform:scaleY(1.12);transform-origin:0 9.955px;">7ms</div>
<div class="t" style="left:426px;top:455.04px;width:50px;text-align:right;font-size:11px;line-height:12.65px;color:#000;transform:scaleY(1.12);transform-origin:0 9.955px;">1500</div>
<div class="t" style="left:481px;top:455.04px;width:30px;text-align:right;font-size:11px;line-height:12.65px;color:#000;transform:scaleY(1.12);transform-origin:0 9.955px;">64</div>
<div style="left:170px;top:468px;width:430px;height:1px;background:#e6e6e6;"></div>
<div class="t" style="left:175px;top:470.04px;width:40px;text-align:right;font-size:11px;line-height:12.65px;color:#000;transform:scaleY(1.12);transform-origin:0 9.955px;">140</div>
<div class="t" style="left:222px;top:470.04px;font-size:11px;line-height:12.65px;color:#000;transform:scaleY(1.12);transform-origin:0 9.955px;">192.168.250.1</div>
<div class="t" style="left:371px;top:470.04px;font-size:11px;line-height:12.65px;color:#000;transform:scaleY(1.12);transform-origin:0 9.955px;">7ms</div>
<div class="t" style="left:426px;top:470.04px;width:50px;text-align:right;font-size:11px;line-height:12.65px;color:#000;transform:scaleY(1.12);transform-origin:0 9.955px;">1500</div>
<div class="t" style="left:481px;top:470.04px;width:30px;text-align:right;font-size:11px;line-height:12.65px;color:#000;transform:scaleY(1.12);transform-origin:0 9.955px;">64</div>
<div style="left:170px;top:483px;width:430px;height:1px;background:#e6e6e6;"></div>
<div class="t" style="left:175px;top:485.04px;width:40px;text-align:right;font-size:11px;line-height:12.65px;color:#000;transform:scaleY(1.12);transform-origin:0 9.955px;">141</div>
<div class="t" style="left:222px;top:485.04px;font-size:11px;line-height:12.65px;color:#000;transform:scaleY(1.12);transform-origin:0 9.955px;">192.168.250.1</div>
<div class="t" style="left:371px;top:485.04px;font-size:11px;line-height:12.65px;color:#000;transform:scaleY(1.12);transform-origin:0 9.955px;">7ms</div>
<div class="t" style="left:426px;top:485.04px;width:50px;text-align:right;font-size:11px;line-height:12.65px;color:#000;transform:scaleY(1.12);transform-origin:0 9.955px;">1500</div>
<div class="t" style="left:481px;top:485.04px;width:30px;text-align:right;font-size:11px;line-height:12.65px;color:#000;transform:scaleY(1.12);transform-origin:0 9.955px;">64</div>
<div style="left:170px;top:498px;width:430px;height:1px;background:#e6e6e6;"></div>
<div class="t" style="left:175px;top:500.04px;width:40px;text-align:right;font-size:11px;line-height:12.65px;color:#000;transform:scaleY(1.12);transform-origin:0 9.955px;">142</div>
<div class="t" style="left:222px;top:500.04px;font-size:11px;line-height:12.65px;color:#000;transform:scaleY(1.12);transform-origin:0 9.955px;">192.168.250.1</div>
<div class="t" style="left:371px;top:500.04px;font-size:11px;line-height:12.65px;color:#000;transform:scaleY(1.12);transform-origin:0 9.955px;">5ms</div>
<div class="t" style="left:426px;top:500.04px;width:50px;text-align:right;font-size:11px;line-height:12.65px;color:#000;transform:scaleY(1.12);transform-origin:0 9.955px;">1500</div>
<div class="t" style="left:481px;top:500.04px;width:30px;text-align:right;font-size:11px;line-height:12.65px;color:#000;transform:scaleY(1.12);transform-origin:0 9.955px;">64</div>
<div style="left:170px;top:513px;width:430px;height:1px;background:#e6e6e6;"></div>
<div class="t" style="left:175px;top:515.04px;width:40px;text-align:right;font-size:11px;line-height:12.65px;color:#000;transform:scaleY(1.12);transform-origin:0 9.955px;">143</div>
<div class="t" style="left:222px;top:515.04px;font-size:11px;line-height:12.65px;color:#000;transform:scaleY(1.12);transform-origin:0 9.955px;">192.168.250.1</div>
<div class="t" style="left:371px;top:515.04px;font-size:11px;line-height:12.65px;color:#000;transform:scaleY(1.12);transform-origin:0 9.955px;">6ms</div>
<div class="t" style="left:426px;top:515.04px;width:50px;text-align:right;font-size:11px;line-height:12.65px;color:#000;transform:scaleY(1.12);transform-origin:0 9.955px;">1500</div>
<div class="t" style="left:481px;top:515.04px;width:30px;text-align:right;font-size:11px;line-height:12.65px;color:#000;transform:scaleY(1.12);transform-origin:0 9.955px;">64</div>
<div style="left:170px;top:528px;width:430px;height:1px;background:#e6e6e6;"></div>
<div class="t" style="left:175px;top:530.04px;width:40px;text-align:right;font-size:11px;line-height:12.65px;color:#000;transform:scaleY(1.12);transform-origin:0 9.955px;">144</div>
<div class="t" style="left:222px;top:530.04px;font-size:11px;line-height:12.65px;color:#000;transform:scaleY(1.12);transform-origin:0 9.955px;">192.168.250.1</div>
<div class="t" style="left:371px;top:530.04px;font-size:11px;line-height:12.65px;color:#000;transform:scaleY(1.12);transform-origin:0 9.955px;">7ms</div>
<div class="t" style="left:426px;top:530.04px;width:50px;text-align:right;font-size:11px;line-height:12.65px;color:#000;transform:scaleY(1.12);transform-origin:0 9.955px;">1500</div>
<div class="t" style="left:481px;top:530.04px;width:30px;text-align:right;font-size:11px;line-height:12.65px;color:#000;transform:scaleY(1.12);transform-origin:0 9.955px;">64</div>
<div style="left:170px;top:543px;width:430px;height:1px;background:#e6e6e6;"></div>
<div class="t" style="left:175px;top:545.04px;width:40px;text-align:right;font-size:11px;line-height:12.65px;color:#000;transform:scaleY(1.12);transform-origin:0 9.955px;">145</div>
<div class="t" style="left:222px;top:545.04px;font-size:11px;line-height:12.65px;color:#000;transform:scaleY(1.12);transform-origin:0 9.955px;">192.168.250.1</div>
<div class="t" style="left:371px;top:545.04px;font-size:11px;line-height:12.65px;color:#000;transform:scaleY(1.12);transform-origin:0 9.955px;">5ms</div>
<div class="t" style="left:426px;top:545.04px;width:50px;text-align:right;font-size:11px;line-height:12.65px;color:#000;transform:scaleY(1.12);transform-origin:0 9.955px;">1500</div>
<div class="t" style="left:481px;top:545.04px;width:30px;text-align:right;font-size:11px;line-height:12.65px;color:#000;transform:scaleY(1.12);transform-origin:0 9.955px;">64</div>
<div style="left:170px;top:558px;width:430px;height:1px;background:#e6e6e6;"></div>
<div style="left:173px;top:334px;width:1px;height:225px;background:#e6e6e6;"></div>
<div style="left:218px;top:334px;width:1px;height:225px;background:#e6e6e6;"></div>
<div style="left:368px;top:334px;width:1px;height:225px;background:#e6e6e6;"></div>
<div style="left:418px;top:334px;width:1px;height:225px;background:#e6e6e6;"></div>
<div style="left:478px;top:334px;width:1px;height:225px;background:#e6e6e6;"></div>
<div style="left:513px;top:334px;width:1px;height:225px;background:#e6e6e6;"></div>
<div style="left:167px;top:559px;width:440px;height:22px;background:#f0f0f0;"></div>
<div style="left:167px;top:559px;width:440px;height:1px;background:#a0a0a0;"></div>
<div style="left:170px;top:561px;width:54px;height:19px;box-sizing:border-box;border-left:1px solid #b8b8b8;background:#ececec;"></div>
<div class="t" style="left:172px;top:564.04px;font-size:11px;line-height:12.65px;color:#000;transform:scaleY(1.12);transform-origin:0 9.955px;">146 items</div>
<div style="left:226px;top:561px;width:105px;height:19px;box-sizing:border-box;border-left:1px solid #b8b8b8;background:#ececec;"></div>
<div class="t" style="left:228px;top:564.04px;font-size:11px;line-height:12.65px;color:#000;transform:scaleY(1.12);transform-origin:0 9.955px;">146 of 146 packet...</div>
<div style="left:332px;top:561px;width:95px;height:19px;box-sizing:border-box;border-left:1px solid #b8b8b8;background:#ececec;"></div>
<div class="t" style="left:334px;top:564.04px;font-size:11px;line-height:12.65px;color:#000;transform:scaleY(1.12);transform-origin:0 9.955px;">0% packet loss</div>
<div style="left:428px;top:561px;width:65px;height:19px;box-sizing:border-box;border-left:1px solid #b8b8b8;background:#ececec;"></div>
<div class="t" style="left:430px;top:564.04px;font-size:11px;line-height:12.65px;color:#000;transform:scaleY(1.12);transform-origin:0 9.955px;">Min: 3 ms</div>
<div style="left:494px;top:561px;width:65px;height:19px;box-sizing:border-box;border-left:1px solid #b8b8b8;background:#ececec;"></div>
<div class="t" style="left:496px;top:564.04px;font-size:11px;line-height:12.65px;color:#000;transform:scaleY(1.12);transform-origin:0 9.955px;">Avg: 5 ms</div>
<div style="left:560px;top:561px;width:60px;height:19px;box-sizing:border-box;border-left:1px solid #b8b8b8;background:#ececec;"></div>
<div class="t" style="left:562px;top:564.04px;font-size:11px;line-height:12.65px;color:#000;transform:scaleY(1.12);transform-origin:0 9.955px;">Max: 11 ms</div>
<div style="left:158px;top:608px;width:450px;height:180px;box-sizing:border-box;border:1px solid #222;border-bottom:none;background:#f0f0f0;"></div>
<div style="left:159px;top:609px;width:450px;height:22px;background:#bfbfbf;"></div>
<div class="t" style="left:164px;top:616.04px;font-size:11px;line-height:12.65px;color:#fff;transform:scaleY(1.12);transform-origin:0 9.955px;">MPLS</div>
<div style="left:164px;top:636px;width:69px;height:19px;background:#d9d9d9;"></div>
<div class="t" style="left:164px;top:640.04px;width:69px;text-align:center;font-size:11px;line-height:12.65px;color:#000;transform:scaleY(1.12);transform-origin:0 9.955px;">Accept Filter</div>
<div style="left:235px;top:636px;width:79px;height:19px;background:#d9d9d9;"></div>
<div class="t" style="left:235px;top:640.04px;width:79px;text-align:center;font-size:11px;line-height:12.65px;color:#000;transform:scaleY(1.12);transform-origin:0 9.955px;">Advertise Filter</div>
<div style="left:316px;top:636px;width:91px;height:19px;background:#d9d9d9;"></div>
<div class="t" style="left:316px;top:640.04px;width:91px;text-align:center;font-size:11px;line-height:12.65px;color:#000;transform:scaleY(1.12);transform-origin:0 9.955px;">Forwarding Table</div>
<div style="left:407px;top:633px;width:89px;height:22px;box-sizing:border-box;background:#f0f0f0;border-left:1px solid #fff;border-top:1px solid #fff;border-right:1px solid #a0a0a0;"></div>
<div class="t" style="left:407px;top:638.04px;width:89px;text-align:center;font-size:11px;line-height:12.65px;color:#000;transform:scaleY(1.12);transform-origin:0 9.955px;">MPLS Interface</div>
<div style="left:497px;top:636px;width:79px;height:19px;background:#d9d9d9;"></div>
<div class="t" style="left:497px;top:640.04px;width:79px;text-align:center;font-size:11px;line-height:12.65px;color:#000;transform:scaleY(1.12);transform-origin:0 9.955px;">Local Bindings</div>
<div style="left:577px;top:636px;width:89px;height:19px;background:#d9d9d9;"></div>
<div class="t" style="left:577px;top:640.04px;width:89px;text-align:center;font-size:11px;line-height:12.65px;color:#000;transform:scaleY(1.12);transform-origin:0 9.955px;">Remote Bindings</div>
<div style="left:159px;top:655px;width:450px;height:2px;background:#f0f0f0;"></div>
<div style="left:163px;top:659px;width:23px;height:23px;box-sizing:border-box;border:1px solid #acacac;background:linear-gradient(#f2f2f2,#ebebeb);"></div>
<svg style="left:169px;top:665px" width="12" height="12" viewBox="0 0 12 12"><path d="M4.2 0.5 H7.8 V4.2 H11.5 V7.8 H7.8 V11.5 H4.2 V7.8 H0.5 V4.2 H4.2Z" fill="#1010a0" stroke="#000050" stroke-width="0.6"/></svg>
<div style="left:189px;top:659px;width:23px;height:23px;box-sizing:border-box;border:1px solid #acacac;background:linear-gradient(#f2f2f2,#ebebeb);"></div>
<svg style="left:195px;top:668px" width="12" height="5" viewBox="0 0 12 5"><rect x="0.5" y="0.5" width="11" height="4" fill="#f4f4f4" stroke="#b8b8b8"/></svg>
<div style="left:221px;top:659px;width:23px;height:23px;box-sizing:border-box;border:1px solid #acacac;background:linear-gradient(#f2f2f2,#ebebeb);"></div>
<svg style="left:226px;top:664px" width="13" height="13" viewBox="0 0 13 13"><path d="M0.8 1 H12.2 L7.8 6 V12 H5.2 V6 Z" fill="#8a8aa0" stroke="#222" stroke-width="1"/></svg>
<div style="left:163px;top:685px;width:450px;height:102px;background:#fff;"></div>
<div style="left:163px;top:685px;width:450px;height:1px;background:#a0a0a0;"></div>
<div style="left:164px;top:686px;width:10px;height:16px;background:#ececec;border-right:1px solid #d0d0d0;"></div>
<div style="left:174px;top:686px;width:120px;height:16px;box-sizing:border-box;background:linear-gradient(#f4f4f4,#ececec);border-right:1px solid #d0d0d0;"></div>
<div class="t" style="left:177px;top:689.04px;font-size:11px;line-height:12.65px;color:#000;transform:scaleY(1.12);transform-origin:0 9.955px;">Interface</div>
<svg style="left:282px;top:691px" width="8" height="8" viewBox="0 0 8 8"><path d="M4.5 1 L7.8 7.5 H1.5Z" fill="#fbfbfb"/><path d="M1.8 7.5 L4.6 1.5" stroke="#9a9a9a" stroke-width="1.1"/></svg>
<div style="left:294px;top:686px;width:80px;height:16px;box-sizing:border-box;background:linear-gradient(#f4f4f4,#ececec);border-right:1px solid #d0d0d0;"></div>
<div class="t" style="left:297px;top:689.04px;font-size:11px;line-height:12.65px;color:#000;transform:scaleY(1.12);transform-origin:0 9.955px;">MPLS MTU</div>
<div style="left:374px;top:686px;width:240px;height:16px;box-sizing:border-box;background:linear-gradient(#f4f4f4,#ececec);border-right:1px solid #d0d0d0;"></div>
<div style="left:163px;top:702px;width:450px;height:1px;background:#a0a0a0;"></div>
<div style="left:163px;top:685px;width:1px;height:102px;background:#a0a0a0;"></div>
<div class="t" style="left:166px;top:704.86px;font-size:9px;line-height:10.35px;color:#3030a0;">*</div>
<div class="t" style="left:176px;top:704.04px;font-size:11px;line-height:12.65px;color:#3535b0;transform:scaleY(1.12);transform-origin:0 9.955px;">all</div>
<div class="t" style="left:321px;top:704.04px;width:50px;text-align:right;font-size:11px;line-height:12.65px;color:#3535b0;transform:scaleY(1.12);transform-origin:0 9.955px;">1500</div>
<div style="left:164px;top:716px;width:440px;height:1px;background:#e8e8e8;"></div>
<div style="left:173px;top:702px;width:1px;height:15px;background:#e8e8e8;"></div>
<div style="left:293px;top:702px;width:1px;height:15px;background:#e8e8e8;"></div>
<div style="left:373px;top:702px;width:1px;height:15px;background:#e8e8e8;"></div>
<div style="left:582px;top:0px;width:17px;height:787px;background:linear-gradient(90deg,rgba(0,0,0,0),rgba(0,0,0,0.08) 50%,rgba(0,0,0,0.32));"></div>
<div style="left:0px;top:788px;width:600px;height:6px;background:linear-gradient(#f4fcfd,#e8f6f8);"></div>
<div style="left:0px;top:787px;width:600px;height:1px;background:#5a6068;"></div>
<div style="left:0px;top:794px;width:600px;height:8px;background:#eef3f7;"></div>
<div style="left:0px;top:794px;width:600px;height:1px;background:#555;"></div>
<div class="t" style="left:91px;top:792.5px;font-size:11.6px;line-height:13.34px;color:#3c4c66;">Imagem JPEG</div>
<div class="t" style="left:290px;top:792.5px;font-size:11.6px;line-height:13.34px;color:#6a7a8a;">Marcas:</div>
<div class="t" style="left:336px;top:792.5px;font-size:11.6px;line-height:13.34px;color:#1a2a3a;">Adicionar uma marca</div>
<div class="t" style="left:484px;top:792.5px;font-size:11.6px;line-height:13.34px;color:#6a7a8a;">Dimensões:</div>
<div class="t" style="left:548px;top:792.5px;font-size:11.6px;line-height:13.34px;color:#1a2a3a;">967 x 570</div>
<div style="left:4px;top:797px;width:36px;height:2px;opacity:.35;background:#4a6a8a;filter:blur(1px);"></div>
<div style="left:600px;top:0px;width:817px;height:802px;background:#e4eef5;"></div>
<div style="left:600px;top:0px;width:817px;height:22px;background:linear-gradient(180deg,#c4d2de 0%,#d0dce6 30%,#e4eef4 55%,#f2f9fb 75%,#eaf4f7 100%);"></div>
<div style="left:1040px;top:-4px;width:290px;height:14px;background:#7a8ea4;filter:blur(3px);opacity:.75;"></div>
<div style="left:1046px;top:5px;width:210px;height:8px;background:#263444;border-radius:4px;filter:blur(2.2px);opacity:.95;"></div>
<div style="left:1176px;top:0px;width:3px;height:9px;background:#263444;filter:blur(0.8px);"></div>
<div style="left:1262px;top:2px;width:40px;height:10px;background:#a8c8e8;filter:blur(3px);opacity:.8;"></div>
<div style="left:599px;top:0px;width:1px;height:802px;background:#2a3038;"></div>
<div style="left:600px;top:0px;width:1px;height:802px;background:#f4faff;"></div>
<div style="left:601px;top:0px;width:5px;height:802px;background:linear-gradient(180deg,#e4eef4 0%,#c8dcec 8%,#b6d3ea 40%,#b4d2ea 100%);"></div>
<svg style="left:607px;top:-2px" width="17" height="17" viewBox="0 0 17 17"><defs><radialGradient id="lg" cx="65%" cy="30%" r="75%"><stop offset="0" stop-color="#9cc8f4"/><stop offset="0.6" stop-color="#4a88d0"/><stop offset="1" stop-color="#1e5aa8"/></radialGradient></defs><circle cx="8" cy="8.5" r="7.6" fill="url(#lg)" stroke="#1f4a80" stroke-width="0.9"/><path d="M3.6 5 Q4.8 11.2 11.2 12.6" stroke="#f4faff" stroke-width="1.3" fill="none"/><path d="M6.2 5.4 Q7.4 9.6 12.2 10.6" stroke="#e8f4ff" stroke-width="1.1" fill="none"/></svg>
<div class="t" style="left:628px;top:1.0px;font-size:12.15px;line-height:13.97px;color:#000;">jean@192.168.10.1 (B-Router) - WinBox v6.34.3 on CCR1009-8G-1S-1S+ (tile)</div>
<div style="left:1319px;top:-3px;width:120px;height:14px;border:1px solid #4a5a6a;border-radius:0 0 5px 5px;background:linear-gradient(#aebccb,#8797a8);box-sizing:border-box;"></div>
<div style="left:1374px;top:-3px;width:50px;height:14px;background:linear-gradient(#e8907a,#c43a28 70%,#d85a40);border-left:1px solid #6a3a30;"></div>
<div style="left:1346px;top:0px;width:1px;height:11px;background:#4a5a6a;"></div>
<div style="left:1328px;top:2px;width:12px;height:5px;box-sizing:border-box;background:#fff;border:1px solid #3a4a5a;"></div>
<div style="left:1356px;top:-2px;width:12px;height:8px;box-sizing:border-box;border:2px solid #fff;outline:1px solid #3a4a5a;background:rgba(0,0,0,0.1);"></div>
<svg style="left:1389px;top:-2px" width="16" height="10" viewBox="0 0 16 10"><path d="M3 0 L12 8 M12 0 L3 8" stroke="#3a2a2a" stroke-width="4"/><path d="M3 0 L12 8 M12 0 L3 8" stroke="#fff" stroke-width="2.4"/></svg>
<div style="left:606px;top:21px;width:811px;height:781px;background:#f0f0f0;"></div>
<div style="left:606px;top:21px;width:811px;height:1px;background:#4a525c;"></div>
<div style="left:606px;top:21px;width:1px;height:781px;background:#4a525c;"></div>
<div style="left:607px;top:22px;width:1px;height:780px;background:#fcfcfc;"></div>
<div style="left:609px;top:24px;width:23px;height:23px;box-sizing:border-box;border:1px solid #acacac;background:linear-gradient(#f2f2f2,#ebebeb);"></div>
<svg style="left:609px;top:24px" width="23" height="23" viewBox="0 0 23 23"><g><path d="M5.8 8 V13.2 H11 Z" fill="#06065a"/><path d="M8.8 10 L11.6 7.6 H13.9 L16.9 10.4 V12.4 L14.2 15.4 H12" fill="none" stroke="#06065a" stroke-width="1.35"/></g></svg>
<div style="left:635px;top:24px;width:23px;height:23px;box-sizing:border-box;border:1px solid #acacac;background:linear-gradient(#f2f2f2,#ebebeb);"></div>
<svg style="left:635px;top:24px" width="23" height="23" viewBox="0 0 23 23"><g transform="translate(23,0) scale(-1,1)"><path d="M5.8 8 V13.2 H11 Z" fill="#06065a"/><path d="M8.8 10 L11.6 7.6 H13.9 L16.9 10.4 V12.4 L14.2 15.4 H12" fill="none" stroke="#06065a" stroke-width="1.35"/></g></svg>
<div style="left:667px;top:24px;width:71px;height:23px;box-sizing:border-box;border:1px solid #acacac;background:linear-gradient(#f2f2f2,#ebebeb);"></div>
<div class="t" style="left:667px;top:30.04px;width:71px;text-align:center;font-size:11px;line-height:12.65px;color:#000;transform:scaleY(1.12);transform-origin:0 9.955px;">Safe Mode</div>
<div style="left:1282px;top:29px;width:12px;height:12px;box-sizing:border-box;border:1px solid #8f8f8f;background:#fff;"></div>
<svg style="left:1282px;top:29px" width="12" height="12" viewBox="0 0 12 12"><path d="M2.5 5.6 L4.7 8.1 L9.3 3.1" fill="none" stroke="#000" stroke-width="2.1"/></svg>
<div class="t" style="left:1300px;top:30.04px;font-size:11px;line-height:12.65px;color:#000;transform:scaleY(1.12);transform-origin:0 9.955px;">Hide Passwords</div>
<div style="left:1382px;top:27px;width:1px;height:17px;background:#dcdcdc;"></div>
<div style="left:1387px;top:30px;width:10px;height:12px;box-sizing:border-box;background:#2e7a20;border:1px solid #1a4010;"></div>
<svg style="left:1387px;top:30px" width="10" height="12"><path d="M1 3.5 H9 M1 6.5 H9 M1 9.5 H9" stroke="#205a18" stroke-width="0.8"/></svg>
<svg style="left:1401px;top:27px" width="14" height="16" viewBox="0 0 14 16"><path d="M3.6 6.5 V3.6 Q3.6 1.4 5.8 1.4 H8.4 Q10.6 1.4 10.6 3.6 V6.5" fill="none" stroke="#707070" stroke-width="1.3"/><path d="M5 6.5 V4.4 Q5 3.6 5.8 3.6 H8.4 Q9.2 3.6 9.2 4.4 V6.5" fill="none" stroke="#8a8a8a" stroke-width="0.9"/><rect x="1.6" y="6.5" width="11" height="8.5" fill="#f8e878" stroke="#6f6f6f" stroke-width="1.1"/><rect x="3.6" y="9.6" width="1.4" height="2.4" fill="#3a3a20"/><rect x="8.5" y="7.2" width="1" height="7.2" fill="#f0c860"/></svg>
<div style="left:608px;top:50px;width:809px;height:1px;background:#a4a4a4;"></div>
<div style="left:608px;top:51px;width:135px;height:1px;background:#fafafa;"></div>
<div style="left:609px;top:52px;width:20px;height:750px;background:linear-gradient(180deg,#3f3fc2 0%,#3a3abd 35%,#2222a0 70%,#000078 100%);"></div>
<div class="t" style="left:620.0px;top:711.5px;transform:translate(-50%,-50%) rotate(-90deg);font-size:19.8px;line-height:20px;color:#9c9cda;letter-spacing:0px;">RouterOS WinBox</div>
<div style="left:629px;top:52px;width:114px;height:750px;background:#f0f0f0;"></div>
<svg style="left:633px;top:55px" width="16" height="16" viewBox="0 0 16 16"><path d="M9.5 1.5 L14 5.5" stroke="#c0c0c0" stroke-width="1.2" stroke-dasharray="1 1"/><path d="M6.5 8.5 H13.8 V15 Q10.2 16.6 6.5 15Z" fill="#404040"/><rect x="7" y="8.8" width="6.3" height="1.9" fill="#f6f6f6"/><rect x="4" y="7.3" width="11.8" height="1.4" fill="#2a2a2a"/><circle cx="10.2" cy="6.6" r="1.3" fill="#222"/><path d="M0.8 15.6 L7 10" stroke="#1a1a1a" stroke-width="2.8"/><path d="M6.5 1.5 L7.1 2.9 L8.5 3.4 L7.1 3.9 L6.5 5.3 L5.9 3.9 L4.5 3.4 L5.9 2.9Z" fill="#e0cc60"/></svg>
<div class="t" style="left:653px;top:58.04px;font-size:11px;line-height:12.65px;color:#000;transform:scaleY(1.12);transform-origin:0 9.955px;">Quick Set</div>
<div style="left:631px;top:74px;width:111px;height:1px;background:#dadada;"></div>
<svg style="left:633px;top:77px" width="16" height="16" viewBox="0 0 16 16"><rect x="1" y="3.5" width="2.2" height="12" rx="1" fill="#c8c8c8"/><rect x="3" y="4" width="13" height="9" fill="#3c9c4c"/><rect x="6" y="5.5" width="3.2" height="4" fill="#1a4a28"/><rect x="10.2" y="5.5" width="3.2" height="4" fill="#1a4a28"/><path d="M4 11.5 H15" stroke="#b8e0a8" stroke-width="1" stroke-dasharray="1 0.8"/></svg>
<div class="t" style="left:653px;top:80.03999999999999px;font-size:11px;line-height:12.65px;color:#000;transform:scaleY(1.12);transform-origin:0 9.955px;">Interfaces</div>
<div style="left:631px;top:96px;width:111px;height:1px;background:#dadada;"></div>
<svg style="left:633px;top:99px" width="16" height="16" viewBox="0 0 16 16"><path d="M1 1 H6 L4.8 2.2 L6.8 4.2 L4.2 6.8 L2.2 4.8 L1 6Z" fill="#62b6ea" stroke="#3a8ccc" stroke-width="0.8"/><g transform="translate(16,0) scale(-1,1)"><path d="M1 1 H6 L4.8 2.2 L6.8 4.2 L4.2 6.8 L2.2 4.8 L1 6Z" fill="#62b6ea" stroke="#3a8ccc" stroke-width="0.8"/></g><g transform="translate(0,16) scale(1,-1)"><path d="M1 1 H6 L4.8 2.2 L6.8 4.2 L4.2 6.8 L2.2 4.8 L1 6Z" fill="#62b6ea" stroke="#3a8ccc" stroke-width="0.8"/></g><g transform="translate(16,16) scale(-1,-1)"><path d="M1 1 H6 L4.8 2.2 L6.8 4.2 L4.2 6.8 L2.2 4.8 L1 6Z" fill="#62b6ea" stroke="#3a8ccc" stroke-width="0.8"/></g></svg>
<div class="t" style="left:653px;top:102.03999999999999px;font-size:11px;line-height:12.65px;color:#000;transform:scaleY(1.12);transform-origin:0 9.955px;">Bridge</div>
<div style="left:631px;top:118px;width:111px;height:1px;background:#dadada;"></div>
<svg style="left:633px;top:121px" width="16" height="16" viewBox="0 0 16 16"><rect x="2" y="7" width="8" height="6" fill="#3a90d8" stroke="#8aa" stroke-width="0.6"/><rect x="4.5" y="13" width="3" height="2.2" fill="#999"/><rect x="10" y="8.5" width="6" height="7" fill="#e8e8e8" stroke="#888" stroke-width="0.6"/><rect x="10.3" y="13" width="5.4" height="2.4" fill="#2a5a30"/><path d="M8 4 H12.5 V1.8 L16 4.8 L12.5 7.8 V5.6 H8Z" fill="#4aa0e0" stroke="#2a70b0" stroke-width="0.5"/></svg>
<div class="t" style="left:653px;top:124.03999999999999px;font-size:11px;line-height:12.65px;color:#000;transform:scaleY(1.12);transform-origin:0 9.955px;">PPP</div>
<div style="left:631px;top:140px;width:111px;height:1px;background:#dadada;"></div>
<svg style="left:633px;top:143px" width="16" height="16" viewBox="0 0 16 16"><rect x="1" y="3.5" width="14" height="5" fill="#f8f8f8" stroke="#bbb" stroke-width="0.8"/><path d="M3 6 H4.6 M5.8 6 H7.4 M8.6 6 H10.2 M11.4 6 H13" stroke="#222" stroke-width="1.6"/><path d="M1.5 12.5 H14.5" stroke="#2a7a3a" stroke-width="1.3"/><path d="M8 8.5 V13" stroke="#2a7a3a" stroke-width="1.2"/></svg>
<div class="t" style="left:653px;top:146.04px;font-size:11px;line-height:12.65px;color:#000;transform:scaleY(1.12);transform-origin:0 9.955px;">Switch</div>
<div style="left:631px;top:162px;width:111px;height:1px;background:#dadada;"></div>
<svg style="left:633px;top:165px" width="16" height="16" viewBox="0 0 16 16"><path d="M4 4 H10 V12" stroke="#ccc" stroke-width="0.8" fill="none"/><circle cx="3" cy="4" r="2.2" fill="#a8a8f0" stroke="#5a5ac8" stroke-width="0.9"/><circle cx="12" cy="4" r="2.2" fill="#a8a8f0" stroke="#5a5ac8" stroke-width="0.9"/><circle cx="12" cy="12" r="2.2" fill="#a8a8f0" stroke="#5a5ac8" stroke-width="0.9"/></svg>
<div class="t" style="left:653px;top:168.04px;font-size:11px;line-height:12.65px;color:#000;transform:scaleY(1.12);transform-origin:0 9.955px;">Mesh</div>
<div style="left:631px;top:184px;width:111px;height:1px;background:#dadada;"></div>
<svg style="left:633px;top:187px" width="16" height="16" viewBox="0 0 16 16"><rect x="0.5" y="1.5" width="15" height="8.5" fill="#f8f8f8" stroke="#aaa" stroke-width="0.8"/><text x="8" y="8.6" font-size="7.4" text-anchor="middle" font-family="Liberation Sans" fill="#444">255</text><path d="M1.5 13 H14.5" stroke="#2a7a3a" stroke-width="1.3"/><path d="M8 10 V13.5" stroke="#2a7a3a" stroke-width="1.2"/></svg>
<div class="t" style="left:653px;top:190.04px;font-size:11px;line-height:12.65px;color:#000;transform:scaleY(1.12);transform-origin:0 9.955px;">IP</div>
<div style="left:631px;top:206px;width:111px;height:1px;background:#dadada;"></div>
<svg style="left:728px;top:188px" width="8" height="12" viewBox="0 0 8 12"><path d="M2 11 L6 6" fill="none" stroke="#fafafa" stroke-width="1"/><path d="M1.5 11 V1.5 L5.8 5.8" fill="none" stroke="#666" stroke-width="1.1"/></svg>
<svg style="left:633px;top:209px" width="16" height="16" viewBox="0 0 16 16"><rect x="0.5" y="1.5" width="15" height="8.5" fill="#f8f8f8" stroke="#aaa" stroke-width="0.8"/><text x="8" y="8.8" font-size="8" font-weight="bold" text-anchor="middle" font-family="Liberation Sans" fill="#333">v6</text><path d="M1.5 13 H14.5" stroke="#2a7a3a" stroke-width="1.3"/><path d="M8 10 V13.5" stroke="#2a7a3a" stroke-width="1.2"/></svg>
<div class="t" style="left:653px;top:212.04px;font-size:11px;line-height:12.65px;color:#000;transform:scaleY(1.12);transform-origin:0 9.955px;">IPv6</div>
<div style="left:631px;top:228px;width:111px;height:1px;background:#dadada;"></div>
<svg style="left:728px;top:210px" width="8" height="12" viewBox="0 0 8 12"><path d="M2 11 L6 6" fill="none" stroke="#fafafa" stroke-width="1"/><path d="M1.5 11 V1.5 L5.8 5.8" fill="none" stroke="#666" stroke-width="1.1"/></svg>
<svg style="left:633px;top:231px" width="16" height="16" viewBox="0 0 16 16"><path d="M1 10 L8 3 L11 3 L11 6 L4 13Z" fill="#fafafa" stroke="#b8b8b8" stroke-width="0.8"/><path d="M5 13 L12 6 L15 6 L15 9 L8 16Z" fill="#fafafa" stroke="#b8b8b8" stroke-width="0.8"/></svg>
<div class="t" style="left:653px;top:234.04px;font-size:11px;line-height:12.65px;color:#000;transform:scaleY(1.12);transform-origin:0 9.955px;">MPLS</div>
<div style="left:631px;top:250px;width:111px;height:1px;background:#dadada;"></div>
<svg style="left:728px;top:232px" width="8" height="12" viewBox="0 0 8 12"><path d="M2 11 L6 6" fill="none" stroke="#fafafa" stroke-width="1"/><path d="M1.5 11 V1.5 L5.8 5.8" fill="none" stroke="#666" stroke-width="1.1"/></svg>
<svg style="left:633px;top:253px" width="16" height="16" viewBox="0 0 16 16"><path d="M1 3.5 C5 3.5 8 12 12 12 V10 L15.5 13 L12 16 V14.5 C7 14.5 5 6.5 1 6.5Z" fill="#8ac8f0"/><path d="M0.5 12 C5 12 7 4 11.5 4 V1.8 L15.5 5 L11.5 8.2 V6.5 C8 6.5 6 14.8 0.5 14.8Z" fill="#2a88d8"/></svg>
<div class="t" style="left:653px;top:256.04px;font-size:11px;line-height:12.65px;color:#000;transform:scaleY(1.12);transform-origin:0 9.955px;">Routing</div>
<div style="left:631px;top:272px;width:111px;height:1px;background:#dadada;"></div>
<svg style="left:728px;top:254px" width="8" height="12" viewBox="0 0 8 12"><path d="M2 11 L6 6" fill="none" stroke="#fafafa" stroke-width="1"/><path d="M1.5 11 V1.5 L5.8 5.8" fill="none" stroke="#666" stroke-width="1.1"/></svg>
<svg style="left:633px;top:275px" width="16" height="16" viewBox="0 0 16 16"><g fill="#c4c4c4"><rect x="6.5" y="0.5" width="3" height="15"/><rect x="0.5" y="6.5" width="15" height="3"/><rect x="6.5" y="0.5" width="3" height="15" transform="rotate(45 8 8)"/><rect x="6.5" y="0.5" width="3" height="15" transform="rotate(-45 8 8)"/></g><circle cx="8" cy="8" r="5" fill="#d0d0d0" stroke="#b0b0b0" stroke-width="0.8"/><rect x="6.3" y="6.3" width="3.4" height="3.4" fill="#f4f4f4"/></svg>
<div class="t" style="left:653px;top:278.04px;font-size:11px;line-height:12.65px;color:#000;transform:scaleY(1.12);transform-origin:0 9.955px;">System</div>
<div style="left:631px;top:294px;width:111px;height:1px;background:#dadada;"></div>
<svg style="left:728px;top:276px" width="8" height="12" viewBox="0 0 8 12"><path d="M2 11 L6 6" fill="none" stroke="#fafafa" stroke-width="1"/><path d="M1.5 11 V1.5 L5.8 5.8" fill="none" stroke="#666" stroke-width="1.1"/></svg>
<svg style="left:633px;top:297px" width="16" height="16" viewBox="0 0 16 16"><path d="M0.6 11 A7.4 7.6 0 0 1 15.4 11 Z" fill="#3a3e44"/><path d="M2.5 9.5 A5.5 5.5 0 0 1 13.5 9.5" fill="none" stroke="#5a6068" stroke-width="0.8" stroke-dasharray="1 1.4"/><path d="M4 4.5 L8.6 10" stroke="#e83a3a" stroke-width="1.4"/><path d="M1.5 13 H14.5" stroke="#2a7a3a" stroke-width="1.2"/><circle cx="8" cy="13" r="1.7" fill="#48b868"/></svg>
<div class="t" style="left:653px;top:300.04px;font-size:11px;line-height:12.65px;color:#000;transform:scaleY(1.12);transform-origin:0 9.955px;">Queues</div>
<div style="left:631px;top:316px;width:111px;height:1px;background:#dadada;"></div>
<svg style="left:633px;top:319px" width="16" height="16" viewBox="0 0 16 16"><path d="M1 3 H6.5 L8 4.5 H15 V14.5 H1Z" fill="#88b4dc"/><path d="M1 6 H15 V14.5 H1Z" fill="#a8cbea"/></svg>
<div class="t" style="left:653px;top:322.04px;font-size:11px;line-height:12.65px;color:#000;transform:scaleY(1.12);transform-origin:0 9.955px;">Files</div>
<div style="left:631px;top:338px;width:111px;height:1px;background:#dadada;"></div>
<svg style="left:633px;top:341px" width="16" height="16" viewBox="0 0 16 16"><path d="M3 1 H13 V15 L12 14 L11 15 L10 14 L9 15 L8 14 L7 15 L6 14 L5 15 L4 14 L3 15Z" fill="#fcfcfc" stroke="#b0b0b0" stroke-width="0.7"/><path d="M5 4.5 H11 M5 6.5 H11 M5 8.5 H11 M5 10.5 H9" stroke="#8aaac4" stroke-width="0.8"/></svg>
<div class="t" style="left:653px;top:344.04px;font-size:11px;line-height:12.65px;color:#000;transform:scaleY(1.12);transform-origin:0 9.955px;">Log</div>
<div style="left:631px;top:360px;width:111px;height:1px;background:#dadada;"></div>
<svg style="left:633px;top:363px" width="16" height="16" viewBox="0 0 16 16"><circle cx="11" cy="4" r="2.6" fill="#e8b888"/><path d="M8 3 Q11 -1 14 3 L14 7 Q11 5 8 7Z" fill="#a86838"/><path d="M7 15 Q7 8.5 11 8.5 Q15 8.5 15 15Z" fill="#48b878"/><circle cx="5" cy="7" r="2.5" fill="#f0c090"/><path d="M2.5 6 Q5 2.5 7.5 6Z" fill="#6a4020"/><path d="M1 16 Q1 10.5 5 10.5 Q9 10.5 9 16Z" fill="#3a90d0"/></svg>
<div class="t" style="left:653px;top:366.04px;font-size:11px;line-height:12.65px;color:#000;transform:scaleY(1.12);transform-origin:0 9.955px;">Radius</div>
<div style="left:631px;top:382px;width:111px;height:1px;background:#dadada;"></div>
<svg style="left:633px;top:385px" width="16" height="16" viewBox="0 0 16 16"><path d="M3 13.5 L12.5 4" stroke="#b0b0b0" stroke-width="2.2"/><circle cx="13" cy="3" r="2.4" fill="none" stroke="#b0b0b0" stroke-width="1.6"/><path d="M2 2 L14 14" stroke="#c8c8c8" stroke-width="1.5"/><path d="M8.5 8.5 L14.5 14.5" stroke="#d83838" stroke-width="2.6"/><path d="M2 2 L5 5" stroke="#888" stroke-width="1.5"/></svg>
<div class="t" style="left:653px;top:388.04px;font-size:11px;line-height:12.65px;color:#000;transform:scaleY(1.12);transform-origin:0 9.955px;">Tools</div>
<div style="left:631px;top:404px;width:111px;height:1px;background:#dadada;"></div>
<svg style="left:728px;top:386px" width="8" height="12" viewBox="0 0 8 12"><path d="M2 11 L6 6" fill="none" stroke="#fafafa" stroke-width="1"/><path d="M1.5 11 V1.5 L5.8 5.8" fill="none" stroke="#666" stroke-width="1.1"/></svg>
<svg style="left:633px;top:407px" width="16" height="16" viewBox="0 0 16 16"><rect x="0.5" y="2.5" width="15" height="11" rx="1.2" fill="#3a3a3a" stroke="#b4b4b4" stroke-width="1.2"/><path d="M3 5 L5 6.3 L3 7.6 M5.5 8 H7.5" stroke="#e8e8e8" stroke-width="0.8" fill="none"/></svg>
<div class="t" style="left:653px;top:410.04px;font-size:11px;line-height:12.65px;color:#000;transform:scaleY(1.12);transform-origin:0 9.955px;">New Terminal</div>
<div style="left:631px;top:426px;width:111px;height:1px;background:#dadada;"></div>
<svg style="left:633px;top:429px" width="16" height="16" viewBox="0 0 16 16"><rect x="1" y="2" width="14" height="9.5" fill="#3a8ed8" stroke="#777" stroke-width="0.8"/><rect x="5.5" y="12" width="5" height="2.5" fill="#999"/></svg>
<div class="t" style="left:653px;top:432.04px;font-size:11px;line-height:12.65px;color:#000;transform:scaleY(1.12);transform-origin:0 9.955px;">LCD</div>
<div style="left:631px;top:448px;width:111px;height:1px;background:#dadada;"></div>
<svg style="left:633px;top:451px" width="16" height="16" viewBox="0 0 16 16"><path d="M6.8 7.8 L6.8 0.8 A7 7 0 0 0 1.6 12.4Z" fill="#e0283a"/><path d="M8.5 7 L8.5 0.5 A7 7 0 0 1 15.3 7Z" fill="#5ab84a"/><path d="M8.5 8.6 L15.3 8.6 A7 7 0 0 1 3 13.6Z" fill="#3a98d8"/></svg>
<div class="t" style="left:653px;top:454.04px;font-size:11px;line-height:12.65px;color:#000;transform:scaleY(1.12);transform-origin:0 9.955px;">Partition</div>
<div style="left:631px;top:470px;width:111px;height:1px;background:#dadada;"></div>
<svg style="left:633px;top:473px" width="16" height="16" viewBox="0 0 16 16"><path d="M2 0.5 H9.5 L12.5 3.5 V15.5 H2Z" fill="#fcfcfc" stroke="#b0b0b0" stroke-width="0.7"/><path d="M9.5 0.5 V3.5 H12.5" fill="none" stroke="#b0b0b0" stroke-width="0.7"/><path d="M7 10.5 H12 V8.3 L15.8 11.5 L12 14.7 V12.5 H7Z" fill="#3a98e0"/></svg>
<div class="t" style="left:653px;top:476.04px;font-size:11px;line-height:12.65px;color:#000;transform:scaleY(1.12);transform-origin:0 9.955px;">Make Supout.rif</div>
<div style="left:631px;top:492px;width:111px;height:1px;background:#dadada;"></div>
<svg style="left:633px;top:495px" width="16" height="16" viewBox="0 0 16 16"><path d="M9 13.5 L11.5 16 L11 13Z" fill="#2a4aa0"/><ellipse cx="8" cy="7.3" rx="7.3" ry="6.6" fill="#3a5ec8"/><text x="8" y="11.5" font-size="11" font-weight="bold" text-anchor="middle" font-family="Liberation Sans" fill="#fff">?</text></svg>
<div class="t" style="left:653px;top:498.04px;font-size:11px;line-height:12.65px;color:#000;transform:scaleY(1.12);transform-origin:0 9.955px;">Manual</div>
<div style="left:631px;top:514px;width:111px;height:1px;background:#dadada;"></div>
<svg style="left:633px;top:517px" width="16" height="16" viewBox="0 0 16 16"><rect x="2.5" y="0.5" width="10" height="15" fill="#b06a38" stroke="#7a4018" stroke-width="0.8"/><path d="M5 2.5 V13 M7.5 2.5 V13 M10 2.5 V13" stroke="#8a4a20" stroke-width="0.6"/><path d="M8 11 H15.5 M10.5 8.5 L8 11 L10.5 13.5" stroke="#3a98e0" stroke-width="1.8" fill="none"/></svg>
<div class="t" style="left:653px;top:520.04px;font-size:11px;line-height:12.65px;color:#000;transform:scaleY(1.12);transform-origin:0 9.955px;">Exit</div>
<div style="left:631px;top:536px;width:111px;height:1px;background:#dadada;"></div>
<div style="left:743px;top:51px;width:674px;height:751px;background:#a0a0a0;"></div>
<div style="left:743px;top:51px;width:1px;height:751px;background:#7a7a7a;"></div>
<div style="left:743px;top:50px;width:674px;height:1px;background:#707070;"></div>
<div style="left:746px;top:99px;width:680px;height:565px;box-sizing:border-box;border:1px solid #1a1a1a;border-right:none;background:#f0f0f0;"></div>
<div style="left:748px;top:100px;width:670px;height:22px;background:#c0c0c0;"></div>
<div class="t" style="left:753px;top:107.03999999999999px;font-size:11px;line-height:12.65px;color:#fff;transform:scaleY(1.12);transform-origin:0 9.955px;">Torch (Running)</div>
<div style="left:1387px;top:104px;width:15px;height:15px;box-sizing:border-box;border:1px solid #333;background:#f4f4f4;"></div>
<div style="left:1390px;top:107px;width:9px;height:9px;box-sizing:border-box;border:1px solid #222;border-top-width:2px;"></div>
<div style="left:1404px;top:104px;width:16px;height:15px;box-sizing:border-box;border:1px solid #333;background:#f4f4f4;"></div>
<svg style="left:1406px;top:107px" width="10" height="9"><path d="M1.5 1 L8.5 8 M8.5 1 L1.5 8" stroke="#111" stroke-width="2"/></svg>
<div style="left:755px;top:134px;width:5px;height:1px;background:#c8c8c8;"></div>
<div class="t" style="left:764px;top:130.04px;font-size:11px;line-height:12.65px;color:#000;transform:scaleY(1.12);transform-origin:0 9.955px;">Basic</div>
<div style="left:794px;top:134px;width:237px;height:1px;background:#a8a8a8;"></div>
<div style="left:794px;top:135px;width:237px;height:1px;background:#fafafa;"></div>
<div class="t" style="left:742px;top:152.04px;width:80px;text-align:right;font-size:11px;line-height:12.65px;color:#000;transform:scaleY(1.12);transform-origin:0 9.955px;">Interface:</div>
<div style="left:832px;top:148px;width:179px;height:18px;box-sizing:border-box;border:1px solid #a9a9a9;background:#fff;"></div>
<div class="t" style="left:836px;top:152.04px;font-size:11px;line-height:12.65px;color:#000;transform:scaleY(1.12);transform-origin:0 9.955px;">vpls7_POP-Itacolomi</div>
<div style="left:1012px;top:148px;width:18px;height:18px;box-sizing:border-box;border:1px solid #acacac;background:#f0f0f0;"></div>
<svg style="left:1012px;top:148px" width="18" height="18" viewBox="0 0 18 18"><rect x="5" y="5" width="7.5" height="1.3" fill="#000"/><path d="M7.4 7.2 H10.1 V9.8 H12.5 L8.75 13.6 L5 9.8 H7.4Z" fill="#000"/></svg>
<div class="t" style="left:742px;top:177.04px;width:80px;text-align:right;font-size:11px;line-height:12.65px;color:#000;transform:scaleY(1.12);transform-origin:0 9.955px;">Entry Timeout:</div>
<div style="left:832px;top:173px;width:184px;height:18px;box-sizing:border-box;border:1px solid #a9a9a9;background:#fff;"></div>
<div class="t" style="left:836px;top:177.04px;font-size:11px;line-height:12.65px;color:#000;transform:scaleY(1.12);transform-origin:0 9.955px;">00:00:03</div>
<div class="t" style="left:1020px;top:177.04px;font-size:11px;line-height:12.65px;color:#000;transform:scaleY(1.12);transform-origin:0 9.955px;">s</div>
<div style="left:755px;top:204px;width:5px;height:1px;background:#c8c8c8;"></div>
<div class="t" style="left:764px;top:198.04px;font-size:11px;line-height:12.65px;color:#000;transform:scaleY(1.12);transform-origin:0 9.955px;">Collect</div>
<div style="left:800px;top:204px;width:231px;height:1px;background:#a8a8a8;"></div>
<div style="left:800px;top:205px;width:231px;height:1px;background:#fafafa;"></div>
<div style="left:761px;top:216px;width:12px;height:12px;box-sizing:border-box;border:1px solid #8f8f8f;background:#fff;"></div>
<svg style="left:761px;top:216px" width="12" height="12" viewBox="0 0 12 12"><path d="M2.5 5.6 L4.7 8.1 L9.3 3.1" fill="none" stroke="#000" stroke-width="2.1"/></svg>
<div class="t" style="left:780px;top:217.04px;font-size:11px;line-height:12.65px;color:#000;transform:scaleY(1.12);transform-origin:0 9.955px;">Src. Address</div>
<div style="left:761px;top:235px;width:12px;height:12px;box-sizing:border-box;border:1px solid #8f8f8f;background:#fff;"></div>
<svg style="left:761px;top:235px" width="12" height="12" viewBox="0 0 12 12"><path d="M2.5 5.6 L4.7 8.1 L9.3 3.1" fill="none" stroke="#000" stroke-width="2.1"/></svg>
<div class="t" style="left:780px;top:236.04px;font-size:11px;line-height:12.65px;color:#000;transform:scaleY(1.12);transform-origin:0 9.955px;">Dst. Address</div>
<div style="left:761px;top:254px;width:12px;height:12px;box-sizing:border-box;border:1px solid #8f8f8f;background:#fff;"></div>
<div class="t" style="left:780px;top:255.04px;font-size:11px;line-height:12.65px;color:#000;transform:scaleY(1.12);transform-origin:0 9.955px;">MAC Protocol</div>
<div style="left:761px;top:273px;width:12px;height:12px;box-sizing:border-box;border:1px solid #8f8f8f;background:#fff;"></div>
<svg style="left:761px;top:273px" width="12" height="12" viewBox="0 0 12 12"><path d="M2.5 5.6 L4.7 8.1 L9.3 3.1" fill="none" stroke="#000" stroke-width="2.1"/></svg>
<div class="t" style="left:780px;top:274.04px;font-size:11px;line-height:12.65px;color:#000;transform:scaleY(1.12);transform-origin:0 9.955px;">Protocol</div>
<div style="left:761px;top:292px;width:12px;height:12px;box-sizing:border-box;border:1px solid #8f8f8f;background:#fff;"></div>
<svg style="left:761px;top:292px" width="12" height="12" viewBox="0 0 12 12"><path d="M2.5 5.6 L4.7 8.1 L9.3 3.1" fill="none" stroke="#000" stroke-width="2.1"/></svg>
<div class="t" style="left:780px;top:293.04px;font-size:11px;line-height:12.65px;color:#000;transform:scaleY(1.12);transform-origin:0 9.955px;">DSCP</div>
<div style="left:899px;top:216px;width:12px;height:12px;box-sizing:border-box;border:1px solid #8f8f8f;background:#fff;"></div>
<svg style="left:899px;top:216px" width="12" height="12" viewBox="0 0 12 12"><path d="M2.5 5.6 L4.7 8.1 L9.3 3.1" fill="none" stroke="#000" stroke-width="2.1"/></svg>
<div class="t" style="left:917px;top:217.04px;font-size:11px;line-height:12.65px;color:#000;transform:scaleY(1.12);transform-origin:0 9.955px;">Src. Address6</div>
<div style="left:899px;top:235px;width:12px;height:12px;box-sizing:border-box;border:1px solid #8f8f8f;background:#fff;"></div>
<svg style="left:899px;top:235px" width="12" height="12" viewBox="0 0 12 12"><path d="M2.5 5.6 L4.7 8.1 L9.3 3.1" fill="none" stroke="#000" stroke-width="2.1"/></svg>
<div class="t" style="left:917px;top:236.04px;font-size:11px;line-height:12.65px;color:#000;transform:scaleY(1.12);transform-origin:0 9.955px;">Dst. Address6</div>
<div style="left:899px;top:254px;width:12px;height:12px;box-sizing:border-box;border:1px solid #8f8f8f;background:#fff;"></div>
<svg style="left:899px;top:254px" width="12" height="12" viewBox="0 0 12 12"><path d="M2.5 5.6 L4.7 8.1 L9.3 3.1" fill="none" stroke="#000" stroke-width="2.1"/></svg>
<div class="t" style="left:917px;top:255.04px;font-size:11px;line-height:12.65px;color:#000;transform:scaleY(1.12);transform-origin:0 9.955px;">Port</div>
<div style="left:899px;top:273px;width:12px;height:12px;box-sizing:border-box;border:1px solid #8f8f8f;background:#fff;"></div>
<div class="t" style="left:917px;top:274.04px;font-size:11px;line-height:12.65px;color:#000;transform:scaleY(1.12);transform-origin:0 9.955px;">VLAN Id</div>
<div style="left:1043px;top:134px;width:5px;height:1px;background:#c8c8c8;"></div>
<div class="t" style="left:1052px;top:130.04px;font-size:11px;line-height:12.65px;color:#000;transform:scaleY(1.12);transform-origin:0 9.955px;">Filters</div>
<div style="left:1083px;top:134px;width:236px;height:1px;background:#a8a8a8;"></div>
<div style="left:1083px;top:135px;width:236px;height:1px;background:#fafafa;"></div>
<div class="t" style="left:1011px;top:152.04px;width:100px;text-align:right;font-size:11px;line-height:12.65px;color:#000;transform:scaleY(1.12);transform-origin:0 9.955px;">Src. Address:</div>
<div style="left:1121px;top:148px;width:197px;height:18px;box-sizing:border-box;border:1px solid #a9a9a9;background:#fff;"></div>
<div class="t" style="left:1125px;top:152.04px;font-size:11px;line-height:12.65px;color:#000;transform:scaleY(1.12);transform-origin:0 9.955px;">0.0.0.0/0</div>
<div class="t" style="left:1011px;top:177.04px;width:100px;text-align:right;font-size:11px;line-height:12.65px;color:#000;transform:scaleY(1.12);transform-origin:0 9.955px;">Dst. Address:</div>
<div style="left:1121px;top:173px;width:197px;height:18px;box-sizing:border-box;border:1px solid #a9a9a9;background:#fff;"></div>
<div class="t" style="left:1125px;top:177.04px;font-size:11px;line-height:12.65px;color:#000;transform:scaleY(1.12);transform-origin:0 9.955px;">192.168.250.1</div>
<div class="t" style="left:1011px;top:202.04px;width:100px;text-align:right;font-size:11px;line-height:12.65px;color:#000;transform:scaleY(1.12);transform-origin:0 9.955px;">Src. Address6:</div>
<div style="left:1121px;top:198px;width:197px;height:18px;box-sizing:border-box;border:1px solid #a9a9a9;background:#fff;"></div>
<div class="t" style="left:1125px;top:202.04px;font-size:11px;line-height:12.65px;color:#000;transform:scaleY(1.12);transform-origin:0 9.955px;">::/0</div>
<div class="t" style="left:1011px;top:227.04px;width:100px;text-align:right;font-size:11px;line-height:12.65px;color:#000;transform:scaleY(1.12);transform-origin:0 9.955px;">Dst. Address6:</div>
<div style="left:1121px;top:223px;width:197px;height:18px;box-sizing:border-box;border:1px solid #a9a9a9;background:#fff;"></div>
<div class="t" style="left:1125px;top:227.04px;font-size:11px;line-height:12.65px;color:#000;transform:scaleY(1.12);transform-origin:0 9.955px;">::/0</div>
<div class="t" style="left:1011px;top:252.04px;width:100px;text-align:right;font-size:11px;line-height:12.65px;color:#8a8a8a;transform:scaleY(1.12);transform-origin:0 9.955px;">MAC Protocol:</div>
<div style="left:1121px;top:248px;width:178px;height:18px;box-sizing:border-box;border:1px solid #b9b9b9;background:#f0f0f0;"></div>
<div class="t" style="left:1125px;top:252.04px;font-size:11px;line-height:12.65px;color:#000;transform:scaleY(1.12);transform-origin:0 9.955px;">all</div>
<div style="left:1300px;top:248px;width:18px;height:18px;box-sizing:border-box;border:1px solid #c4c4c4;background:#f0f0f0;"></div>
<svg style="left:1300px;top:248px" width="18" height="18" viewBox="0 0 18 18"><rect x="5" y="5" width="7.5" height="1.3" fill="#b0b0b0"/><path d="M7.4 7.2 H10.1 V9.8 H12.5 L8.75 13.6 L5 9.8 H7.4Z" fill="#b0b0b0"/></svg>
<div class="t" style="left:1011px;top:277.04px;width:100px;text-align:right;font-size:11px;line-height:12.65px;color:#000;transform:scaleY(1.12);transform-origin:0 9.955px;">Protocol:</div>
<div style="left:1121px;top:273px;width:178px;height:18px;box-sizing:border-box;border:1px solid #a9a9a9;background:#fff;"></div>
<div class="t" style="left:1125px;top:277.04px;font-size:11px;line-height:12.65px;color:#000;transform:scaleY(1.12);transform-origin:0 9.955px;">any</div>
<div style="left:1300px;top:273px;width:18px;height:18px;box-sizing:border-box;border:1px solid #acacac;background:#f0f0f0;"></div>
<svg style="left:1300px;top:273px" width="18" height="18" viewBox="0 0 18 18"><rect x="5" y="5" width="7.5" height="1.3" fill="#000"/><path d="M7.4 7.2 H10.1 V9.8 H12.5 L8.75 13.6 L5 9.8 H7.4Z" fill="#000"/></svg>
<div class="t" style="left:1011px;top:302.04px;width:100px;text-align:right;font-size:11px;line-height:12.65px;color:#000;transform:scaleY(1.12);transform-origin:0 9.955px;">Port:</div>
<div style="left:1121px;top:298px;width:178px;height:18px;box-sizing:border-box;border:1px solid #a9a9a9;background:#fff;"></div>
<div class="t" style="left:1125px;top:302.04px;font-size:11px;line-height:12.65px;color:#000;transform:scaleY(1.12);transform-origin:0 9.955px;">any</div>
<div style="left:1300px;top:298px;width:18px;height:18px;box-sizing:border-box;border:1px solid #acacac;background:#f0f0f0;"></div>
<svg style="left:1300px;top:298px" width="18" height="18" viewBox="0 0 18 18"><rect x="5" y="5" width="7.5" height="1.3" fill="#000"/><path d="M7.4 7.2 H10.1 V9.8 H12.5 L8.75 13.6 L5 9.8 H7.4Z" fill="#000"/></svg>
<div class="t" style="left:1011px;top:327.04px;width:100px;text-align:right;font-size:11px;line-height:12.65px;color:#8a8a8a;transform:scaleY(1.12);transform-origin:0 9.955px;">VLAN Id:</div>
<div style="left:1121px;top:323px;width:178px;height:18px;box-sizing:border-box;border:1px solid #b9b9b9;background:#f0f0f0;"></div>
<div class="t" style="left:1125px;top:327.04px;font-size:11px;line-height:12.65px;color:#000;transform:scaleY(1.12);transform-origin:0 9.955px;">any</div>
<div style="left:1300px;top:323px;width:18px;height:18px;box-sizing:border-box;border:1px solid #c4c4c4;background:#f0f0f0;"></div>
<svg style="left:1300px;top:323px" width="18" height="18" viewBox="0 0 18 18"><rect x="5" y="5" width="7.5" height="1.3" fill="#b0b0b0"/><path d="M7.4 7.2 H10.1 V9.8 H12.5 L8.75 13.6 L5 9.8 H7.4Z" fill="#b0b0b0"/></svg>
<div class="t" style="left:1011px;top:352.04px;width:100px;text-align:right;font-size:11px;line-height:12.65px;color:#000;transform:scaleY(1.12);transform-origin:0 9.955px;">DSCP:</div>
<div style="left:1121px;top:348px;width:178px;height:18px;box-sizing:border-box;border:1px solid #a9a9a9;background:#fff;"></div>
<div class="t" style="left:1125px;top:352.04px;font-size:11px;line-height:12.65px;color:#000;transform:scaleY(1.12);transform-origin:0 9.955px;">any</div>
<div style="left:1300px;top:348px;width:18px;height:18px;box-sizing:border-box;border:1px solid #acacac;background:#f0f0f0;"></div>
<svg style="left:1300px;top:348px" width="18" height="18" viewBox="0 0 18 18"><rect x="5" y="5" width="7.5" height="1.3" fill="#000"/><path d="M7.4 7.2 H10.1 V9.8 H12.5 L8.75 13.6 L5 9.8 H7.4Z" fill="#000"/></svg>
<div style="left:1331px;top:129px;width:83px;height:23px;box-sizing:border-box;border:1px solid #acacac;background:linear-gradient(#f2f2f2,#ebebeb);"></div>
<div class="t" style="left:1331px;top:135.04px;width:83px;text-align:center;font-size:11px;line-height:12.65px;color:#000;transform:scaleY(1.12);transform-origin:0 9.955px;">Start</div>
<div style="left:1331px;top:155px;width:83px;height:23px;box-sizing:border-box;border:1px solid #1c1c1c;background:linear-gradient(#f2f2f2,#ebebeb);"></div>
<div class="t" style="left:1331px;top:161.04px;width:83px;text-align:center;font-size:11px;line-height:12.65px;color:#000;transform:scaleY(1.12);transform-origin:0 9.955px;">Stop</div>
<div style="left:1331px;top:181px;width:83px;height:23px;box-sizing:border-box;border:1px solid #acacac;background:linear-gradient(#f2f2f2,#ebebeb);"></div>
<div class="t" style="left:1331px;top:187.04px;width:83px;text-align:center;font-size:11px;line-height:12.65px;color:#000;transform:scaleY(1.12);transform-origin:0 9.955px;">Close</div>
<div style="left:1331px;top:213px;width:83px;height:23px;box-sizing:border-box;border:1px solid #acacac;background:linear-gradient(#f2f2f2,#ebebeb);"></div>
<div class="t" style="left:1331px;top:219.04px;width:83px;text-align:center;font-size:11px;line-height:12.65px;color:#000;transform:scaleY(1.12);transform-origin:0 9.955px;">New Window</div>
<div style="left:749px;top:379px;width:670px;height:282px;background:#fff;"></div>
<div style="left:749px;top:379px;width:1px;height:282px;background:#a0a0a0;"></div>
<div style="left:749px;top:379px;width:670px;height:1px;background:#a0a0a0;"></div>
<div style="left:749px;top:380px;width:5px;height:16px;background:#ececec;border-right:1px solid #d0d0d0;"></div>
<div style="left:754px;top:380px;width:40px;height:16px;box-sizing:border-box;background:linear-gradient(#f4f4f4,#ececec);border-right:1px solid #d0d0d0;"></div>
<div class="t" style="left:757px;top:383.04px;font-size:11px;line-height:12.65px;color:#000;transform:scaleY(1.12);transform-origin:0 9.955px;">Et...</div>
<svg style="left:782px;top:385px" width="8" height="8" viewBox="0 0 8 8"><path d="M4.5 1 L7.8 7.5 H1.5Z" fill="#fbfbfb"/><path d="M1.8 7.5 L4.6 1.5" stroke="#9a9a9a" stroke-width="1.1"/></svg>
<div style="left:794px;top:380px;width:35px;height:16px;box-sizing:border-box;background:linear-gradient(#f4f4f4,#ececec);border-right:1px solid #d0d0d0;"></div>
<div class="t" style="left:797px;top:383.04px;font-size:11px;line-height:12.65px;color:#000;transform:scaleY(1.12);transform-origin:0 9.955px;">Prot...</div>
<div style="left:829px;top:380px;width:140px;height:16px;box-sizing:border-box;background:linear-gradient(#f4f4f4,#ececec);border-right:1px solid #d0d0d0;"></div>
<div class="t" style="left:832px;top:383.04px;font-size:11px;line-height:12.65px;color:#000;transform:scaleY(1.12);transform-origin:0 9.955px;">Src.</div>
<svg style="left:957px;top:385px" width="8" height="8" viewBox="0 0 8 8"><path d="M4.5 1 L7.8 7.5 H1.5Z" fill="#fbfbfb"/><path d="M1.8 7.5 L4.6 1.5" stroke="#9a9a9a" stroke-width="1.1"/></svg>
<div style="left:969px;top:380px;width:140px;height:16px;box-sizing:border-box;background:linear-gradient(#f4f4f4,#ececec);border-right:1px solid #d0d0d0;"></div>
<div class="t" style="left:972px;top:383.04px;font-size:11px;line-height:12.65px;color:#000;transform:scaleY(1.12);transform-origin:0 9.955px;">Dst.</div>
<div style="left:1109px;top:380px;width:45px;height:16px;box-sizing:border-box;background:linear-gradient(#f4f4f4,#ececec);border-right:1px solid #d0d0d0;"></div>
<div class="t" style="left:1112px;top:383.04px;font-size:11px;line-height:12.65px;color:#000;transform:scaleY(1.12);transform-origin:0 9.955px;">VLAN Id</div>
<div style="left:1154px;top:380px;width:45px;height:16px;box-sizing:border-box;background:linear-gradient(#f4f4f4,#ececec);border-right:1px solid #d0d0d0;"></div>
<div class="t" style="left:1157px;top:383.04px;font-size:11px;line-height:12.65px;color:#000;transform:scaleY(1.12);transform-origin:0 9.955px;">DSCP</div>
<div style="left:1199px;top:380px;width:55px;height:16px;box-sizing:border-box;background:linear-gradient(#f4f4f4,#ececec);border-right:1px solid #d0d0d0;"></div>
<div class="t" style="left:1202px;top:383.04px;font-size:11px;line-height:12.65px;color:#000;transform:scaleY(1.12);transform-origin:0 9.955px;">Tx Rate</div>
<div style="left:1254px;top:380px;width:55px;height:16px;box-sizing:border-box;background:linear-gradient(#f4f4f4,#ececec);border-right:1px solid #d0d0d0;"></div>
<div class="t" style="left:1257px;top:383.04px;font-size:11px;line-height:12.65px;color:#000;transform:scaleY(1.12);transform-origin:0 9.955px;">Rx Rate</div>
<div style="left:1309px;top:380px;width:55px;height:16px;box-sizing:border-box;background:linear-gradient(#f4f4f4,#ececec);border-right:1px solid #d0d0d0;"></div>
<div class="t" style="left:1312px;top:383.04px;font-size:11px;line-height:12.65px;color:#000;transform:scaleY(1.12);transform-origin:0 9.955px;">Tx Pack...</div>
<div style="left:1364px;top:380px;width:40px;height:16px;box-sizing:border-box;background:linear-gradient(#f4f4f4,#ececec);border-right:1px solid #d0d0d0;"></div>
<div class="t" style="left:1367px;top:383.04px;font-size:11px;line-height:12.65px;color:#000;transform:scaleY(1.12);transform-origin:0 9.955px;">Rx Pack</div>
<div style="left:1403px;top:380px;width:14px;height:16px;box-sizing:border-box;background:#ececec;border-left:1px solid #d0d0d0;"></div>
<svg style="left:1406px;top:386px" width="10" height="6" viewBox="0 0 10 6"><path d="M0 0 H10 L5 5.5 Z" fill="#000"/></svg>
<div style="left:749px;top:396px;width:670px;height:1px;background:#a0a0a0;"></div>
<div class="t" style="left:756px;top:398.04px;font-size:11px;line-height:12.65px;color:#000;transform:scaleY(1.12);transform-origin:0 9.955px;">800 (ip)</div>
<div class="t" style="left:797px;top:398.04px;font-size:11px;line-height:12.65px;color:#000;transform:scaleY(1.12);transform-origin:0 9.955px;">1 (ic...</div>
<div class="t" style="left:832px;top:398.04px;font-size:11px;line-height:12.65px;color:#000;transform:scaleY(1.12);transform-origin:0 9.955px;">192.168.250.2</div>
<div class="t" style="left:972px;top:398.04px;font-size:11px;line-height:12.65px;color:#000;transform:scaleY(1.12);transform-origin:0 9.955px;">192.168.250.1</div>
<div class="t" style="left:1190px;top:398.04px;width:60px;text-align:right;font-size:11px;line-height:12.65px;color:#000;transform:scaleY(1.12);transform-origin:0 9.955px;">12.1 kbps</div>
<div class="t" style="left:1245px;top:398.04px;width:60px;text-align:right;font-size:11px;line-height:12.65px;color:#000;transform:scaleY(1.12);transform-origin:0 9.955px;">12.1 kbps</div>
<div class="t" style="left:1340px;top:398.04px;width:20px;text-align:right;font-size:11px;line-height:12.65px;color:#000;transform:scaleY(1.12);transform-origin:0 9.955px;">1</div>
<div class="t" style="left:1395px;top:398.04px;width:20px;text-align:right;font-size:11px;line-height:12.65px;color:#000;transform:scaleY(1.12);transform-origin:0 9.955px;">1</div>
<div style="left:750px;top:411px;width:670px;height:1px;background:#e6e6e6;"></div>
<div style="left:753px;top:397px;width:1px;height:14px;background:#e6e6e6;"></div>
<div style="left:793px;top:397px;width:1px;height:14px;background:#e6e6e6;"></div>
<div style="left:828px;top:397px;width:1px;height:14px;background:#e6e6e6;"></div>
<div style="left:968px;top:397px;width:1px;height:14px;background:#e6e6e6;"></div>
<div style="left:1108px;top:397px;width:1px;height:14px;background:#e6e6e6;"></div>
<div style="left:1153px;top:397px;width:1px;height:14px;background:#e6e6e6;"></div>
<div style="left:1198px;top:397px;width:1px;height:14px;background:#e6e6e6;"></div>
<div style="left:1253px;top:397px;width:1px;height:14px;background:#e6e6e6;"></div>
<div style="left:1308px;top:397px;width:1px;height:14px;background:#e6e6e6;"></div>
<div style="left:1363px;top:397px;width:1px;height:14px;background:#e6e6e6;"></div>
<div style="left:752px;top:520px;width:680px;height:290px;box-sizing:border-box;border:1px solid #1a1a1a;background:#f0f0f0;"></div>
<div style="left:753px;top:521px;width:670px;height:22px;background:#4f50cd;"></div>
<div style="left:753px;top:521px;width:670px;height:1px;background:#7a7ae0;"></div>
<div style="left:753px;top:521px;width:1px;height:22px;background:#7a7ae0;"></div>
<div class="t" style="left:758px;top:528.04px;font-size:11px;line-height:12.65px;color:#fff;transform:scaleY(1.12);transform-origin:0 9.955px;">MPLS</div>
<div style="left:1393px;top:525px;width:15px;height:15px;box-sizing:border-box;border:1px solid #333;background:#f8f8f8;"></div>
<div style="left:1396px;top:528px;width:9px;height:9px;box-sizing:border-box;border:1px solid #222;border-top-width:2px;"></div>
<div style="left:1410px;top:525px;width:16px;height:15px;box-sizing:border-box;border:1px solid #333;background:#f8f8f8;"></div>
<svg style="left:1412px;top:528px" width="10" height="9"><path d="M1.5 1 L8.5 8 M8.5 1 L1.5 8" stroke="#111" stroke-width="2"/></svg>
<div style="left:758px;top:548px;width:77px;height:19px;background:#d9d9d9;"></div>
<div class="t" style="left:758px;top:552.04px;width:77px;text-align:center;font-size:11px;line-height:12.65px;color:#000;transform:scaleY(1.12);transform-origin:0 9.955px;">LDP Interface</div>
<div style="left:836px;top:548px;width:78px;height:19px;background:#d9d9d9;"></div>
<div class="t" style="left:836px;top:552.04px;width:78px;text-align:center;font-size:11px;line-height:12.65px;color:#000;transform:scaleY(1.12);transform-origin:0 9.955px;">LDP Neighbor</div>
<div style="left:915px;top:548px;width:70px;height:19px;background:#d9d9d9;"></div>
<div class="t" style="left:915px;top:552.04px;width:70px;text-align:center;font-size:11px;line-height:12.65px;color:#000;transform:scaleY(1.12);transform-origin:0 9.955px;">Accept Filter</div>
<div style="left:986px;top:548px;width:80px;height:19px;background:#d9d9d9;"></div>
<div class="t" style="left:986px;top:552.04px;width:80px;text-align:center;font-size:11px;line-height:12.65px;color:#000;transform:scaleY(1.12);transform-origin:0 9.955px;">Advertise Filter</div>
<div style="left:1067px;top:548px;width:91px;height:19px;background:#d9d9d9;"></div>
<div class="t" style="left:1067px;top:552.04px;width:91px;text-align:center;font-size:11px;line-height:12.65px;color:#000;transform:scaleY(1.12);transform-origin:0 9.955px;">Forwarding Table</div>
<div style="left:1158px;top:545px;width:90px;height:22px;box-sizing:border-box;background:#f0f0f0;border-left:1px solid #fff;border-top:1px solid #fff;border-right:1px solid #a0a0a0;"></div>
<div class="t" style="left:1158px;top:550.04px;width:90px;text-align:center;font-size:11px;line-height:12.65px;color:#000;transform:scaleY(1.12);transform-origin:0 9.955px;">MPLS Interface</div>
<div style="left:1249px;top:548px;width:77px;height:19px;background:#d9d9d9;"></div>
<div class="t" style="left:1249px;top:552.04px;width:77px;text-align:center;font-size:11px;line-height:12.65px;color:#000;transform:scaleY(1.12);transform-origin:0 9.955px;">Local Bindings</div>
<div style="left:1328px;top:548px;width:89px;height:19px;background:#d9d9d9;"></div>
<div class="t" style="left:1328px;top:552.04px;width:89px;text-align:center;font-size:11px;line-height:12.65px;color:#000;transform:scaleY(1.12);transform-origin:0 9.955px;">Remote Bindings</div>
<div style="left:757px;top:571px;width:23px;height:23px;box-sizing:border-box;border:1px solid #acacac;background:linear-gradient(#f2f2f2,#ebebeb);"></div>
<svg style="left:763px;top:577px" width="12" height="12" viewBox="0 0 12 12"><path d="M4.2 0.5 H7.8 V4.2 H11.5 V7.8 H7.8 V11.5 H4.2 V7.8 H0.5 V4.2 H4.2Z" fill="#1010a0" stroke="#000050" stroke-width="0.6"/></svg>
<div style="left:783px;top:571px;width:23px;height:23px;box-sizing:border-box;border:1px solid #acacac;background:linear-gradient(#f2f2f2,#ebebeb);"></div>
<svg style="left:789px;top:580px" width="12" height="5" viewBox="0 0 12 5"><rect x="0.5" y="0.5" width="11" height="4" fill="#f4f4f4" stroke="#b8b8b8"/></svg>
<div style="left:815px;top:571px;width:23px;height:23px;box-sizing:border-box;border:1px solid #acacac;background:linear-gradient(#f2f2f2,#ebebeb);"></div>
<svg style="left:820px;top:576px" width="13" height="13" viewBox="0 0 13 13"><path d="M0.8 1 H12.2 L7.8 6 V12 H5.2 V6 Z" fill="#8a8aa0" stroke="#222" stroke-width="1"/></svg>
<div style="left:1363px;top:573px;width:60px;height:18px;box-sizing:border-box;border:1px solid #a9a9a9;background:#fff;"></div>
<div class="t" style="left:1368px;top:576.04px;font-size:11px;line-height:12.65px;color:#a0a0a0;transform:scaleY(1.12);transform-origin:0 9.955px;font-style:italic;">Find</div>
<div style="left:757px;top:597px;width:670px;height:205px;background:#fff;"></div>
<div style="left:757px;top:597px;width:670px;height:1px;background:#a0a0a0;"></div>
<div style="left:758px;top:598px;width:10px;height:16px;background:#ececec;border-right:1px solid #d0d0d0;"></div>
<div style="left:768px;top:598px;width:120px;height:16px;box-sizing:border-box;background:linear-gradient(#f4f4f4,#ececec);border-right:1px solid #d0d0d0;"></div>
<div class="t" style="left:771px;top:601.04px;font-size:11px;line-height:12.65px;color:#000;transform:scaleY(1.12);transform-origin:0 9.955px;">Interface</div>
<svg style="left:876px;top:603px" width="8" height="8" viewBox="0 0 8 8"><path d="M4.5 1 L7.8 7.5 H1.5Z" fill="#fbfbfb"/><path d="M1.8 7.5 L4.6 1.5" stroke="#9a9a9a" stroke-width="1.1"/></svg>
<div style="left:888px;top:598px;width:80px;height:16px;box-sizing:border-box;background:linear-gradient(#f4f4f4,#ececec);border-right:1px solid #d0d0d0;"></div>
<div class="t" style="left:891px;top:601.04px;font-size:11px;line-height:12.65px;color:#000;transform:scaleY(1.12);transform-origin:0 9.955px;">MPLS MTU</div>
<div style="left:968px;top:598px;width:440px;height:16px;box-sizing:border-box;background:linear-gradient(#f4f4f4,#ececec);border-right:1px solid #d0d0d0;"></div>
<div style="left:1407px;top:598px;width:12px;height:16px;background:#ececec;border-left:1px solid #d0d0d0;"></div>
<svg style="left:1409px;top:603px" width="10" height="6" viewBox="0 0 10 6"><path d="M0 0 H10 L5 5.5 Z" fill="#000"/></svg>
<div style="left:757px;top:614px;width:670px;height:1px;background:#a0a0a0;"></div>
<div style="left:757px;top:597px;width:1px;height:205px;background:#a0a0a0;"></div>
<div class="t" style="left:760px;top:616.86px;font-size:9px;line-height:10.35px;color:#3030a0;">*</div>
<div class="t" style="left:770px;top:616.04px;font-size:11px;line-height:12.65px;color:#3535b0;transform:scaleY(1.12);transform-origin:0 9.955px;">all</div>
<div class="t" style="left:915px;top:616.04px;width:50px;text-align:right;font-size:11px;line-height:12.65px;color:#3535b0;transform:scaleY(1.12);transform-origin:0 9.955px;">1500</div>
<div style="left:758px;top:614px;width:670px;height:15px;box-sizing:border-box;border:1px dotted #888;"></div>
<div style="left:767px;top:615px;width:1px;height:13px;background:#e8e8e8;"></div>
<div style="left:887px;top:615px;width:1px;height:13px;background:#e8e8e8;"></div>
<div style="left:967px;top:615px;width:1px;height:13px;background:#e8e8e8;"></div>
</body></html>
